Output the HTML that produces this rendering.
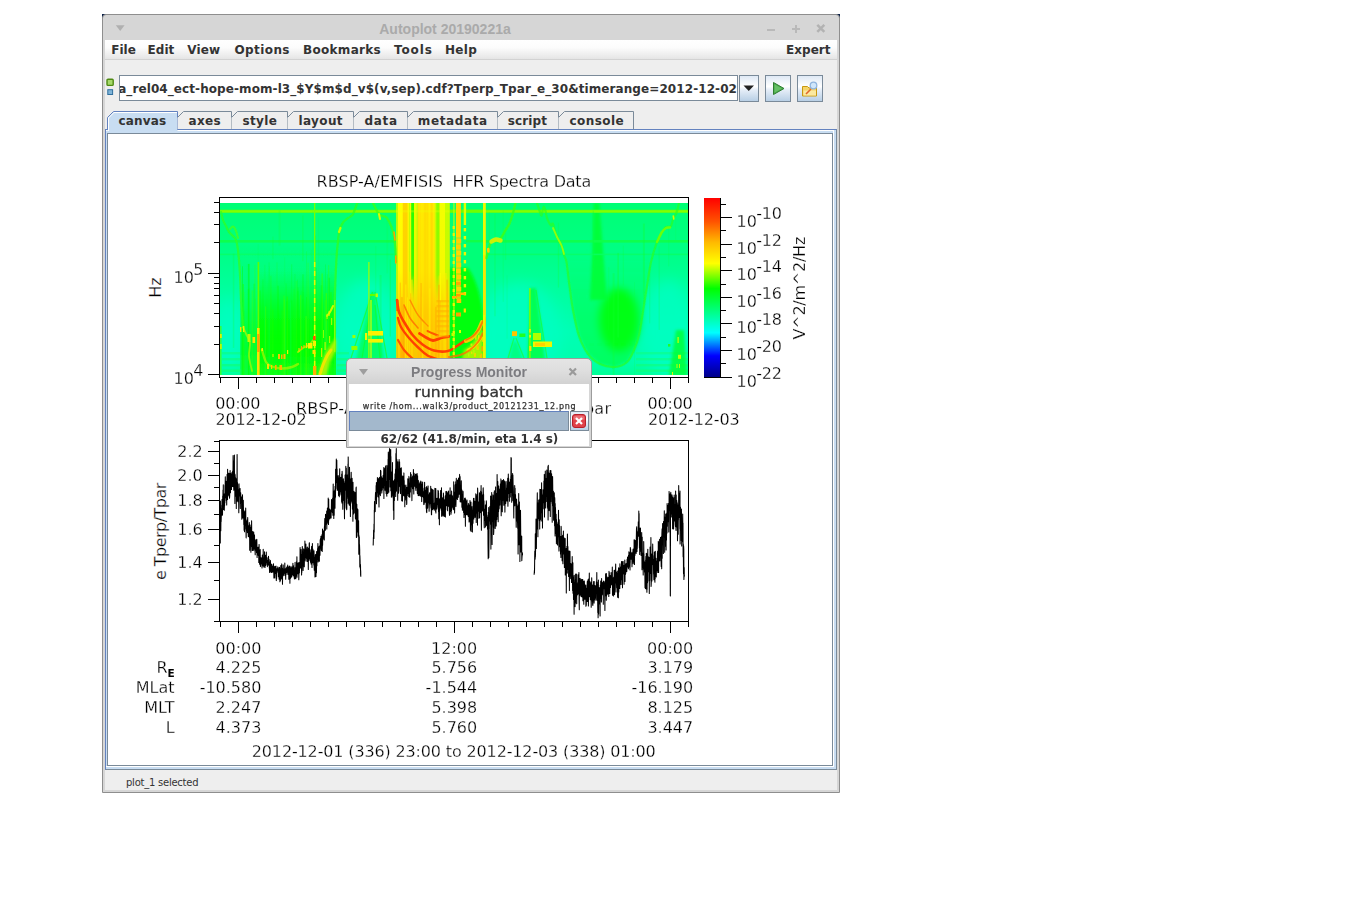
<!DOCTYPE html>
<html lang="en">
<head>
<meta charset="utf-8">
<title>Autoplot 20190221a</title>
<style>
html,body{margin:0;padding:0;background:#fff;}
body{width:1345px;height:916px;overflow:hidden;position:relative;font-family:"DejaVu Sans","Liberation Sans",sans-serif;font-size:12px;color:#333;}
#root{position:absolute;left:0;top:0;width:1345px;height:916px;overflow:hidden;background:#fff;}
#root div,#root span,#root svg{position:absolute;box-sizing:border-box;}
#win{left:102px;top:14px;width:738px;height:779px;background:#d6d6d6;border:1px solid #8e8e8e;border-radius:4px 4px 0 0;}
.corner{background:#0a1e46;}
#title{left:102px;top:21px;width:686px;height:17px;text-align:center;font:bold 14px/17px "Liberation Sans","DejaVu Sans",sans-serif;color:#aaaaaa;white-space:pre;}
#inner{left:105px;top:40px;width:732px;height:750px;background:#eeeeee;}
#menubar{left:105px;top:40px;width:732px;height:20px;background:linear-gradient(#ffffff 0%,#fcfcfc 40%,#e9e9e9 90%,#e4e4e4 100%);border-bottom:1px solid #d2d2d2;}
.mi{top:41px;height:19px;font:bold 12px/19px "DejaVu Sans","Liberation Sans",sans-serif;color:#333;white-space:pre;}
#uri{left:119px;top:75px;width:619px;height:26px;border:1px solid #7a8a99;background:#fff;overflow:hidden;}
#uri span{right:0px;top:1px;letter-spacing:0.085px;font:bold 12px/25px "DejaVu Sans","Liberation Sans",sans-serif;color:#333;white-space:pre;}
.btn{top:75px;height:27px;border:1px solid #7a8a99;background:linear-gradient(#dfe9f5 0%,#ffffff 42%,#e6eef8 55%,#b8cfe5 100%);}
.tab{top:112px;height:19px;font:bold 12px/19px "DejaVu Sans","Liberation Sans",sans-serif;color:#333;text-align:left;white-space:pre;letter-spacing:0.12px;}
#status{left:126px;top:773px;height:20px;letter-spacing:-0.24px;font:10px/20px "DejaVu Sans","Liberation Sans",sans-serif;color:#333;white-space:pre;}
#tabpanel{left:105px;top:129px;width:732px;height:641px;border:1px solid #6382bf;border-right-color:#7a8a99;border-bottom-color:#7a8a99;background:#c8ddf2;}
#tabwhite{left:106px;top:130px;width:728px;height:637px;border:1px solid #fff;border-left:0;}
#canvas{left:107px;top:133px;width:726px;height:633px;border:1px solid #7a8a99;background:#fff;}
#plot{left:0;top:0;width:1345px;height:916px;}
#plot text{font-family:"DejaVu Sans","Liberation Sans",sans-serif;font-size:16px;fill:#000;stroke:#fff;stroke-width:0.26px;}
#pm{left:346px;top:358px;width:246px;height:90px;border:1px solid #9c9c9c;border-radius:5px 5px 0 0;background:linear-gradient(#e4e4e4 0px,#dedede 12px,#d2d2d2 25px,#d6d6d6 26px);}
#pmtitle{left:346px;top:364px;width:246px;height:17px;text-align:center;font:bold 14px/17px "Liberation Sans","DejaVu Sans",sans-serif;color:#7c7c80;white-space:pre;}
#pmbody{left:349px;top:384px;width:240px;height:62px;background:#fff;}
#pmtask{left:349px;top:383.4px;width:240px;height:19px;text-align:center;font:14px/19px "DejaVu Sans","Liberation Sans",sans-serif;color:#333;white-space:pre;transform:scaleX(1.11);transform-origin:50% 50%;-webkit-text-stroke:0.3px #333;}
#pmsub{left:349.5px;top:402px;width:240px;height:10px;text-align:center;font:8px/10px "DejaVu Sans","Liberation Sans",sans-serif;color:#333;white-space:pre;letter-spacing:0.7px;-webkit-text-stroke:0.25px #333;}
#pmbar{left:349px;top:411px;width:220px;height:20px;border:1px solid #7a8a99;border-top-color:#6382bf;border-left-color:#6382bf;background:#a3b8cc;}
#pmcancel{left:570px;top:411px;width:19px;height:20px;border:1px solid #7a8a99;background:linear-gradient(#dfe9f5 0%,#ffffff 42%,#e6eef8 55%,#b8cfe5 100%);}
#pmstat{left:349.4px;top:431.6px;width:240px;height:15px;text-align:center;letter-spacing:-0.07px;font:bold 12px/15px "DejaVu Sans","Liberation Sans",sans-serif;color:#333;white-space:pre;}
</style>
</head>
<body>
<div id="root">
<div class="corner" style="left:102px;top:14px;width:4px;height:4px"></div>
<div class="corner" style="left:836px;top:14px;width:4px;height:4px"></div>
<div id="win"></div>
<svg id="tbicons" style="left:102px;top:14px;width:738px;height:26px" viewBox="0 0 738 26"><path d="M13.8 11.2h8.8l-4.4 5.8z" fill="#b0b0b0"/><path d="M665 15h8v2h-8z" fill="#b9b9b9"/><path d="M690 14h3v-3h2v3h3v2h-3v3h-2v-3h-3z" fill="#b9b9b9"/><path d="M715.3 10.8l7 7M722.3 10.8l-7 7" stroke="#b2b2b2" stroke-width="2.5" fill="none"/></svg>
<div id="title">Autoplot 20190221a</div>
<div id="inner"></div>
<div id="menubar"></div>
<span class="mi" style="left:111.2px;letter-spacing:0.05px">File</span>
<span class="mi" style="left:147.6px;letter-spacing:0px">Edit</span>
<span class="mi" style="left:187.2px;letter-spacing:0.2px">View</span>
<span class="mi" style="left:234.4px;letter-spacing:0.42px">Options</span>
<span class="mi" style="left:303px;letter-spacing:0.31px">Bookmarks</span>
<span class="mi" style="left:394px;letter-spacing:0.87px">Tools</span>
<span class="mi" style="left:445px;letter-spacing:0.33px">Help</span>
<span class="mi" style="left:786px;letter-spacing:0.05px">Expert</span>
<svg id="uriicon" style="left:106px;top:78px;width:10px;height:20px" viewBox="0 0 10 20"><rect x="1" y="1.2" width="6.2" height="6.2" rx="1" fill="#a6d96a" stroke="#4e8a13" stroke-width="1.4"/><rect x="1.8" y="11.7" width="4.8" height="4.8" fill="#7fb4d8" stroke="#2f6f9f" stroke-width="1"/></svg>
<div id="uri"><span>a_rel04_ect-hope-mom-l3_$Y$m$d_v$(v,sep).cdf?Tperp_Tpar_e_30&amp;timerange=2012-12-02</span></div>
<div class="btn" id="dd" style="left:739px;width:20px"></div>
<div class="btn" id="go" style="left:765px;width:26px"></div>
<div class="btn" id="browse" style="left:797px;width:26px"></div>
<svg id="btnicons" style="left:739px;top:75px;width:86px;height:27px" viewBox="0 0 86 27"><path d="M4.5 10.5h10.5l-5.25 5.5z" fill="#222"/><path d="M34.5 7.5l10.5 6-10.5 6z" fill="#4cae4c" stroke="#2e7d32" stroke-width="1" stroke-linejoin="round"/><path d="M35.6 9.4l7.2 4.1-7.2 4.1z" fill="#7ed07e" opacity=".55"/><path d="M63.5 11.5h5l1.5 1.5h7.5v8h-14z" fill="#f5d469" stroke="#c79810" stroke-width="1"/><path d="M64.5 15.5h12.5v5h-12.5z" fill="#fbe9a0"/><path d="M67 19l5-5" stroke="#e0652a" stroke-width="1.6"/><circle cx="74.5" cy="10.5" r="3.3" fill="#cfe6fb" stroke="#8fb4de" stroke-width="1.3"/></svg>
<div id="tabpanel"></div><div id="tabwhite"></div>
<svg id="tabshapes" style="left:105px;top:110px;width:540px;height:22px" viewBox="105 110 540 22">
<path d="M107.5 131.5V117.5l6-6H177.5V131.5z" fill="#c8ddf2"/>
<path d="M108.5 131V118l5.5-5.5H177" fill="none" stroke="#fff" stroke-width="1"/>
<path d="M107.5 130V117.5l6-6H177.5V129.5" fill="none" stroke="#6382bf" stroke-width="1"/>
<path d="M177.5 129V117.5l6-6H231.5V129z" fill="#eeeeee"/>
<path d="M177.5 117.5l6-6H231.5V129.5" fill="none" stroke="#7a8a99" stroke-width="1"/>
<path d="M231.5 129V117.5l6-6H287.5V129z" fill="#eeeeee"/>
<path d="M231.5 117.5l6-6H287.5V129.5" fill="none" stroke="#7a8a99" stroke-width="1"/>
<path d="M287.5 129V117.5l6-6H353.5V129z" fill="#eeeeee"/>
<path d="M287.5 117.5l6-6H353.5V129.5" fill="none" stroke="#7a8a99" stroke-width="1"/>
<path d="M353.5 129V117.5l6-6H407.5V129z" fill="#eeeeee"/>
<path d="M353.5 117.5l6-6H407.5V129.5" fill="none" stroke="#7a8a99" stroke-width="1"/>
<path d="M407.5 129V117.5l6-6H497.5V129z" fill="#eeeeee"/>
<path d="M407.5 117.5l6-6H497.5V129.5" fill="none" stroke="#7a8a99" stroke-width="1"/>
<path d="M497.5 129V117.5l6-6H558.5V129z" fill="#eeeeee"/>
<path d="M497.5 117.5l6-6H558.5V129.5" fill="none" stroke="#7a8a99" stroke-width="1"/>
<path d="M558.5 129V117.5l6-6H633.5V129z" fill="#eeeeee"/>
<path d="M558.5 117.5l6-6H633.5V129.5" fill="none" stroke="#7a8a99" stroke-width="1"/>
</svg>
<div class="tab" style="left:118.4px;width:59px;letter-spacing:0.18px">canvas</div>
<div class="tab" style="left:188.4px;width:43px;letter-spacing:0.4px">axes</div>
<div class="tab" style="left:242.4px;width:45px;letter-spacing:0.4px">style</div>
<div class="tab" style="left:298.4px;width:55px;letter-spacing:0.4px">layout</div>
<div class="tab" style="left:364.4px;width:43px;letter-spacing:0.7px">data</div>
<div class="tab" style="left:417.79999999999995px;width:79px;letter-spacing:0.62px">metadata</div>
<div class="tab" style="left:507.79999999999995px;width:50px;letter-spacing:0.1px">script</div>
<div class="tab" style="left:569.4px;width:64px;letter-spacing:0.45px">console</div>
<div id="canvas"></div>
<svg id="plot" viewBox="0 0 1345 916" width="1345" height="916">
<defs>
<clipPath id="sclip"><rect x="220" y="203" width="468" height="172"/></clipPath>
<filter id="b1" x="-20%" y="-20%" width="140%" height="140%"><feGaussianBlur stdDeviation="0.6"/></filter>
<filter id="b2" x="-30%" y="-30%" width="160%" height="160%"><feGaussianBlur stdDeviation="1.6"/></filter>
<filter id="b4" x="-40%" y="-40%" width="180%" height="180%"><feGaussianBlur stdDeviation="4"/></filter>
<filter id="b7" x="-50%" y="-50%" width="200%" height="200%"><feGaussianBlur stdDeviation="7"/></filter>
<linearGradient id="sbase" x1="0" y1="0" x2="0" y2="1"><stop offset="0" stop-color="#00ff74"/><stop offset="0.27" stop-color="#00ff84"/><stop offset="0.5" stop-color="#00ff9e"/><stop offset="0.75" stop-color="#00ffb4"/><stop offset="0.92" stop-color="#00ffac"/><stop offset="1" stop-color="#00ff94"/></linearGradient>
<linearGradient id="sgl" gradientUnits="userSpaceOnUse" x1="0" y1="245" x2="0" y2="375"><stop offset="0" stop-color="#00ff30" stop-opacity="0"/><stop offset="0.3" stop-color="#00ff30" stop-opacity="0.3"/><stop offset="0.55" stop-color="#00ff18" stop-opacity="0.75"/><stop offset="0.8" stop-color="#04ff08" stop-opacity="0.95"/><stop offset="1" stop-color="#10ff20" stop-opacity="1"/></linearGradient>
<linearGradient id="sgu" gradientUnits="userSpaceOnUse" x1="0" y1="250" x2="0" y2="368"><stop offset="0" stop-color="#00ff40" stop-opacity="0"/><stop offset="0.3" stop-color="#00ff38" stop-opacity="0.35"/><stop offset="0.6" stop-color="#00ff28" stop-opacity="0.5"/><stop offset="1" stop-color="#00ff30" stop-opacity="0.6"/></linearGradient>
<linearGradient id="sfade" gradientUnits="userSpaceOnUse" x1="0" y1="203" x2="0" y2="375"><stop offset="0" stop-color="#fff" stop-opacity="1"/><stop offset="0.42" stop-color="#fff" stop-opacity="1"/><stop offset="0.58" stop-color="#fff" stop-opacity="0"/><stop offset="1" stop-color="#fff" stop-opacity="0"/></linearGradient>
<mask id="mtop" maskUnits="userSpaceOnUse" x="390" y="200" width="70" height="180"><rect x="390" y="200" width="70" height="180" fill="url(#sfade)"/></mask>
<linearGradient id="sgl2" gradientUnits="userSpaceOnUse" x1="0" y1="270" x2="0" y2="375"><stop offset="0" stop-color="#00ff00" stop-opacity="0"/><stop offset="0.35" stop-color="#00ff00" stop-opacity="0.5"/><stop offset="0.7" stop-color="#00ff00" stop-opacity="0.9"/><stop offset="1" stop-color="#00ff00" stop-opacity="0.1"/></linearGradient>
<linearGradient id="sband" x1="0" y1="0" x2="0" y2="1"><stop offset="0" stop-color="#ffc800" stop-opacity="0"/><stop offset="0.4" stop-color="#ffc800" stop-opacity="0.1"/><stop offset="0.62" stop-color="#ffc000" stop-opacity="0.6"/><stop offset="1" stop-color="#ffa800" stop-opacity="0.75"/></linearGradient>
<linearGradient id="sgz" x1="0" y1="0" x2="0" y2="1"><stop offset="0" stop-color="#00ff40" stop-opacity="0"/><stop offset="0.4" stop-color="#00ff20" stop-opacity="0.5"/><stop offset="0.6" stop-color="#00ff00" stop-opacity="1"/><stop offset="1" stop-color="#10ff00" stop-opacity="1"/></linearGradient>
</defs>
<g id="spectrogram" clip-path="url(#sclip)">
<rect x="220" y="203" width="468" height="172" fill="url(#sbase)"/>
<g filter="url(#b7)" fill="#00ffc4" opacity="0.75">
<ellipse cx="228" cy="335" rx="14" ry="38"/>
<ellipse cx="366" cy="330" rx="30" ry="50"/>
<ellipse cx="520" cy="335" rx="42" ry="52"/>
<ellipse cx="668" cy="330" rx="26" ry="50"/>
</g>
<g filter="url(#b4)">
<ellipse cx="619" cy="320" rx="20" ry="32" fill="#00ff00"/>
<ellipse cx="617" cy="318" rx="13" ry="24" fill="#00ff00"/>
</g>
<g filter="url(#b2)">
<path d="M564 250L569.5 286L573 310L579 336L588 354L600 364L615 367L627 362L634 350L639 335L644 305L647 286L652 255Z" fill="url(#sgu)"/>
<path d="M593.5 203H599.5L603 250L607 300H590L592.5 250Z" fill="#00ff30" opacity="0.85"/>
</g>
<g filter="url(#b1)"><path d="M240.5 376V300L239 245H337L336 300V376Z" fill="url(#sgl)"/><path d="M259 376V270H334V376Z" fill="url(#sgl2)"/></g>
<rect x="241" y="270" width="16.5" height="105" fill="#00ff80" opacity="0.3"/>
<rect x="220" y="209.6" width="468" height="3.4" fill="#40ff30"/>
<rect x="220" y="210.2" width="468" height="2.2" fill="#84ff00"/>
<rect x="220" y="240" width="468" height="2.6" fill="#10ff48" opacity="0.9"/>
<rect x="220" y="253.6" width="468" height="1.6" fill="#08ff64" opacity="0.8"/>
<rect x="222" y="352" width="18" height="2.4" fill="#10ff70" opacity="0.5"/>
<rect x="337" y="352" width="12" height="2.4" fill="#10ff70" opacity="0.5"/>
<rect x="636" y="352" width="52" height="2.4" fill="#10ff78" opacity="0.5"/>
<rect x="222" y="358" width="18" height="2.4" fill="#10ff70" opacity="0.55"/>
<rect x="337" y="358" width="12" height="2.4" fill="#10ff70" opacity="0.55"/>
<rect x="636" y="358" width="52" height="2.4" fill="#10ff78" opacity="0.55"/>
<rect x="222" y="364" width="18" height="2.4" fill="#10ff70" opacity="0.6"/>
<rect x="337" y="364" width="12" height="2.4" fill="#10ff70" opacity="0.6"/>
<rect x="636" y="364" width="52" height="2.4" fill="#10ff78" opacity="0.6"/>
<rect x="222" y="369.5" width="18" height="2.4" fill="#10ff70" opacity="0.65"/>
<rect x="337" y="369.5" width="12" height="2.4" fill="#10ff70" opacity="0.65"/>
<rect x="636" y="369.5" width="52" height="2.4" fill="#10ff78" opacity="0.65"/>
<g opacity="0.8">
<rect x="283.5" y="295.6" width="1.7" height="79.4" fill="#40ff00" opacity="0.48"/>
<rect x="321.4" y="273.4" width="1.6" height="101.6" fill="#40ff00" opacity="0.56"/>
<rect x="315.5" y="267.6" width="1.0" height="107.4" fill="#00ff00" opacity="0.52"/>
<rect x="324.7" y="300.1" width="1.3" height="74.9" fill="#40ff00" opacity="0.73"/>
<rect x="302.5" y="298.9" width="0.8" height="76.1" fill="#00ff00" opacity="0.67"/>
<rect x="246.9" y="264.1" width="1.7" height="110.9" fill="#00ff50" opacity="0.27"/>
<rect x="284.6" y="288.4" width="1.6" height="86.6" fill="#00ff50" opacity="0.37"/>
<rect x="268.7" y="262.3" width="0.7" height="112.7" fill="#00ff30" opacity="0.45"/>
<rect x="292.8" y="317.9" width="0.7" height="57.1" fill="#00ff30" opacity="0.41"/>
<rect x="262.6" y="279.3" width="0.7" height="95.7" fill="#00ff00" opacity="0.45"/>
<rect x="320.6" y="285.2" width="1.7" height="89.8" fill="#00ff00" opacity="0.36"/>
<rect x="328.1" y="265.1" width="1.1" height="109.9" fill="#40ff00" opacity="0.46"/>
<rect x="294.2" y="273.9" width="1.4" height="101.1" fill="#00ff30" opacity="0.29"/>
<rect x="272.3" y="319.8" width="1.5" height="55.2" fill="#00ff00" opacity="0.32"/>
<rect x="307.5" y="262.7" width="1.2" height="112.3" fill="#40ff00" opacity="0.34"/>
<rect x="293.6" y="288.8" width="0.8" height="86.2" fill="#20ff00" opacity="0.46"/>
<rect x="277.1" y="285.7" width="1.8" height="89.3" fill="#00ff00" opacity="0.38"/>
<rect x="332.3" y="310.2" width="1.0" height="64.8" fill="#00ff00" opacity="0.36"/>
<rect x="278.1" y="313.3" width="1.4" height="61.7" fill="#00ff00" opacity="0.27"/>
<rect x="254.8" y="288.5" width="0.6" height="86.5" fill="#00ff50" opacity="0.41"/>
<rect x="268.9" y="266.4" width="0.7" height="108.6" fill="#00ff50" opacity="0.57"/>
<rect x="242.5" y="284.1" width="1.3" height="90.9" fill="#20ff00" opacity="0.73"/>
<rect x="286.5" y="296.5" width="1.6" height="78.5" fill="#20ff00" opacity="0.56"/>
<rect x="270.2" y="275.7" width="1.3" height="99.3" fill="#20ff00" opacity="0.33"/>
<rect x="300.1" y="295.2" width="1.4" height="79.8" fill="#40ff00" opacity="0.69"/>
<rect x="297.7" y="287.3" width="0.7" height="87.7" fill="#00ff00" opacity="0.51"/>
<rect x="265.0" y="306.4" width="1.1" height="68.6" fill="#40ff00" opacity="0.66"/>
<rect x="297.1" y="279.6" width="0.8" height="95.4" fill="#00ff00" opacity="0.31"/>
<rect x="286.1" y="301.2" width="1.3" height="73.8" fill="#00ff00" opacity="0.39"/>
<rect x="327.2" y="274.2" width="0.6" height="100.8" fill="#00ff30" opacity="0.46"/>
<rect x="264.4" y="264.8" width="0.9" height="110.2" fill="#00ff50" opacity="0.54"/>
<rect x="253.4" y="283.7" width="1.7" height="91.3" fill="#00ff30" opacity="0.58"/>
<rect x="306.0" y="297.1" width="0.8" height="77.9" fill="#00ff00" opacity="0.71"/>
<rect x="285.6" y="283.4" width="1.0" height="91.6" fill="#00ff00" opacity="0.26"/>
<rect x="300.8" y="290.9" width="1.5" height="84.1" fill="#00ff30" opacity="0.32"/>
<rect x="247.8" y="289.2" width="1.0" height="85.8" fill="#00ff00" opacity="0.70"/>
<rect x="310.3" y="304.2" width="1.6" height="70.8" fill="#00ff30" opacity="0.43"/>
<rect x="305.4" y="316.1" width="1.6" height="58.9" fill="#40ff00" opacity="0.72"/>
<rect x="243.8" y="292.0" width="0.6" height="83.0" fill="#40ff00" opacity="0.44"/>
<rect x="242.2" y="266.3" width="0.7" height="108.7" fill="#00ff00" opacity="0.75"/>
<rect x="323.7" y="305.7" width="1.1" height="69.3" fill="#00ff50" opacity="0.48"/>
<rect x="284.5" y="294.5" width="1.2" height="80.5" fill="#00ff50" opacity="0.26"/>
<rect x="297.5" y="290.9" width="0.9" height="84.1" fill="#00ff00" opacity="0.50"/>
<rect x="298.8" y="317.2" width="0.9" height="57.8" fill="#00ff00" opacity="0.43"/>
<rect x="254.5" y="298.7" width="1.2" height="76.3" fill="#00ff30" opacity="0.58"/>
<rect x="282.5" y="315.5" width="1.0" height="59.5" fill="#00ff30" opacity="0.35"/>
<rect x="281.5" y="310.4" width="1.7" height="64.6" fill="#20ff00" opacity="0.44"/>
<rect x="295.8" y="281.0" width="0.8" height="94.0" fill="#40ff00" opacity="0.43"/>
<rect x="325.2" y="264.4" width="0.7" height="110.6" fill="#00ff30" opacity="0.66"/>
<rect x="251.6" y="290.3" width="1.7" height="84.7" fill="#40ff00" opacity="0.44"/>
<rect x="289.9" y="302.3" width="1.5" height="72.7" fill="#00ff50" opacity="0.48"/>
<rect x="248.0" y="263.9" width="1.6" height="111.1" fill="#00ff00" opacity="0.59"/>
<rect x="267.4" y="283.3" width="1.4" height="91.7" fill="#00ff50" opacity="0.26"/>
<rect x="253.8" y="289.3" width="0.6" height="85.7" fill="#00ff30" opacity="0.37"/>
<rect x="254.2" y="264.8" width="1.4" height="110.2" fill="#40ff00" opacity="0.30"/>
<rect x="291.3" y="300.4" width="1.0" height="74.6" fill="#00ff00" opacity="0.59"/>
<rect x="259.7" y="290.5" width="0.8" height="84.5" fill="#00ff00" opacity="0.63"/>
<rect x="291.3" y="264.2" width="0.9" height="110.8" fill="#00ff30" opacity="0.52"/>
<rect x="330.0" y="292.0" width="1.8" height="83.0" fill="#20ff00" opacity="0.45"/>
<rect x="315.4" y="316.4" width="0.7" height="58.6" fill="#40ff00" opacity="0.31"/>
<rect x="283.6" y="299.5" width="1.7" height="75.5" fill="#40ff00" opacity="0.53"/>
<rect x="302.4" y="292.2" width="1.6" height="82.8" fill="#00ff30" opacity="0.48"/>
<rect x="302.2" y="274.3" width="1.5" height="100.7" fill="#00ff00" opacity="0.36"/>
<rect x="325.6" y="320.8" width="1.8" height="54.2" fill="#00ff50" opacity="0.74"/>
<rect x="328.6" y="277.7" width="1.5" height="97.3" fill="#00ff00" opacity="0.42"/>
<rect x="248.8" y="288.5" width="1.3" height="86.5" fill="#00ff30" opacity="0.49"/>
<rect x="243.7" y="310.5" width="0.7" height="64.5" fill="#00ff00" opacity="0.34"/>
<rect x="272.5" y="309.3" width="0.8" height="65.7" fill="#20ff00" opacity="0.75"/>
<rect x="325.7" y="293.1" width="1.4" height="81.9" fill="#40ff00" opacity="0.72"/>
<rect x="287.3" y="318.9" width="0.7" height="56.1" fill="#20ff00" opacity="0.47"/>
<rect x="481.3" y="269.5" width="0.8" height="70.5" fill="#10ff30" opacity="0.30"/>
<rect x="642.9" y="223.5" width="2.0" height="80.4" fill="#10ff30" opacity="0.41"/>
<rect x="504.8" y="227.4" width="1.4" height="32.7" fill="#10ff30" opacity="0.23"/>
<rect x="452.9" y="235.9" width="0.6" height="30.3" fill="#10ff30" opacity="0.26"/>
<rect x="471.8" y="206.5" width="1.4" height="102.6" fill="#10ff30" opacity="0.45"/>
<rect x="278.6" y="210.5" width="2.0" height="35.0" fill="#10ff30" opacity="0.29"/>
<rect x="649.2" y="267.0" width="1.0" height="56.4" fill="#10ff30" opacity="0.30"/>
<rect x="379.6" y="275.1" width="2.0" height="104.2" fill="#10ff30" opacity="0.31"/>
<rect x="272.4" y="236.6" width="1.0" height="22.6" fill="#10ff30" opacity="0.36"/>
<rect x="675.5" y="205.8" width="0.6" height="34.0" fill="#10ff30" opacity="0.24"/>
<rect x="557.8" y="222.6" width="1.3" height="64.9" fill="#10ff30" opacity="0.32"/>
<rect x="617.3" y="252.9" width="1.7" height="84.6" fill="#10ff30" opacity="0.41"/>
<rect x="232.8" y="253.6" width="1.5" height="94.3" fill="#10ff30" opacity="0.31"/>
<rect x="622.8" y="245.7" width="0.9" height="39.7" fill="#10ff30" opacity="0.31"/>
<rect x="494.2" y="213.9" width="1.5" height="102.3" fill="#10ff30" opacity="0.25"/>
<rect x="306.0" y="251.3" width="0.9" height="100.2" fill="#10ff30" opacity="0.38"/>
<rect x="312.3" y="210.7" width="0.8" height="100.0" fill="#10ff30" opacity="0.18"/>
<rect x="658.7" y="246.5" width="0.9" height="83.4" fill="#10ff30" opacity="0.34"/>
<rect x="592.7" y="210.7" width="1.1" height="71.3" fill="#10ff30" opacity="0.40"/>
<rect x="389.7" y="259.4" width="1.1" height="77.1" fill="#10ff30" opacity="0.45"/>
<rect x="608.5" y="267.2" width="0.6" height="63.4" fill="#10ff30" opacity="0.38"/>
<rect x="506.6" y="275.4" width="0.9" height="63.3" fill="#10ff30" opacity="0.18"/>
<rect x="302.0" y="215.6" width="1.6" height="45.5" fill="#10ff30" opacity="0.32"/>
<rect x="284.4" y="257.5" width="0.7" height="27.0" fill="#10ff30" opacity="0.27"/>
<rect x="386.5" y="219.8" width="1.6" height="53.6" fill="#10ff30" opacity="0.16"/>
<rect x="314.9" y="235.6" width="1.2" height="52.4" fill="#10ff30" opacity="0.43"/>
<rect x="502.7" y="210.6" width="1.1" height="91.3" fill="#10ff30" opacity="0.18"/>
<rect x="612.6" y="273.1" width="2.0" height="101.8" fill="#10ff30" opacity="0.32"/>
<rect x="310.6" y="249.8" width="1.7" height="50.7" fill="#10ff30" opacity="0.23"/>
<rect x="276.0" y="262.4" width="2.0" height="34.4" fill="#10ff30" opacity="0.19"/>
<rect x="375.1" y="246.1" width="1.2" height="53.3" fill="#10ff30" opacity="0.20"/>
<rect x="318.0" y="217.8" width="1.1" height="91.8" fill="#10ff30" opacity="0.18"/>
<rect x="634.1" y="282.2" width="0.7" height="101.2" fill="#10ff30" opacity="0.23"/>
<rect x="668.1" y="226.9" width="1.2" height="39.4" fill="#10ff30" opacity="0.20"/>
<rect x="257.7" y="244.2" width="0.9" height="64.8" fill="#10ff30" opacity="0.19"/>
<rect x="488.8" y="212.2" width="1.0" height="29.7" fill="#10ff30" opacity="0.28"/>
</g>
<rect x="449.5" y="203" width="34" height="172" fill="#00ff78"/>
<g filter="url(#b2)"><path d="M449 268H468Q480 285 484 320V376H449Z" fill="#00ff08"/></g>
<rect x="449.5" y="209.6" width="34" height="3.2" fill="#70ff00"/>
<rect x="466" y="240" width="17" height="2.4" fill="#10ff48"/>
<rect x="396.4" y="203" width="53.1" height="172" fill="#ffec00"/>
<rect x="396.4" y="203" width="1.6" height="172" fill="#b8ff00"/>
<rect x="398" y="203" width="4.8" height="172" fill="#ffff00"/>
<rect x="402.8" y="203" width="4.9" height="172" fill="#ffd400"/>
<rect x="407.7" y="203" width="1.3" height="172" fill="#f8f800"/>
<rect x="409" y="203" width="0.8" height="172" fill="#b0ff00" mask="url(#mtop)"/>
<rect x="409.8" y="203" width="1.4" height="172" fill="#f0ff00"/>
<rect x="411.2" y="203" width="2.9" height="172" fill="#28ff00" mask="url(#mtop)"/>
<rect x="414.1" y="203" width="2.7" height="172" fill="#e8ff00"/>
<rect x="416.8" y="203" width="0.8" height="172" fill="#90ff00" mask="url(#mtop)"/>
<rect x="417.6" y="203" width="16.7" height="172" fill="#ffe800"/>
<rect x="434.3" y="203" width="1.9" height="172" fill="#c8ff00" mask="url(#mtop)"/>
<rect x="436.2" y="203" width="3.5" height="172" fill="#88ff00" mask="url(#mtop)"/>
<rect x="439.7" y="203" width="5.3" height="172" fill="#f4ff00"/>
<rect x="445" y="203" width="4.5" height="172" fill="#c4ff00" mask="url(#mtop)"/>
<rect x="425.6" y="203" width="1.7" height="172" fill="#ffe000" opacity="0.7"/>
<rect x="418.2" y="203" width="1.2" height="172" fill="#ffdc00" opacity="0.7"/>
<rect x="431.6" y="203" width="1.6" height="172" fill="#ffd800" opacity="0.7"/>
<rect x="424.2" y="203" width="1.6" height="172" fill="#ffd800" opacity="0.7"/>
<rect x="432.9" y="203" width="1.9" height="172" fill="#ffec00" opacity="0.7"/>
<rect x="419.1" y="203" width="1.7" height="172" fill="#ffd800" opacity="0.7"/>
<rect x="432.3" y="203" width="2.1" height="172" fill="#ffec00" opacity="0.7"/>
<rect x="420.4" y="203" width="2.2" height="172" fill="#ffec00" opacity="0.7"/>
<rect x="430.8" y="203" width="1.7" height="172" fill="#ffd800" opacity="0.7"/>
<rect x="418.9" y="203" width="1.4" height="172" fill="#ffec00" opacity="0.7"/>
<rect x="425.9" y="203" width="1.2" height="172" fill="#ffd800" opacity="0.7"/>
<rect x="426.0" y="203" width="1.7" height="172" fill="#ffec00" opacity="0.7"/>
<rect x="426.4" y="203" width="1.7" height="172" fill="#ffdc00" opacity="0.7"/>
<rect x="429.2" y="203" width="0.8" height="172" fill="#fff400" opacity="0.7"/>
<rect x="396.4" y="203" width="53.1" height="172" fill="url(#sband)"/>
<rect x="396.4" y="210.2" width="53" height="2.2" fill="#f0ff00" opacity="0.35"/>
<rect x="409.5" y="271.7" width="1.3" height="104.3" fill="#fff000" opacity="0.67"/>
<rect x="399.7" y="282.6" width="0.9" height="93.4" fill="#ffb000" opacity="0.80"/>
<rect x="445.2" y="272.9" width="1.3" height="103.1" fill="#fff000" opacity="0.59"/>
<rect x="446.6" y="279.7" width="0.9" height="96.3" fill="#ffa000" opacity="0.72"/>
<rect x="443.4" y="275.8" width="1.5" height="100.2" fill="#fff000" opacity="0.45"/>
<rect x="428.8" y="288.2" width="1.8" height="87.8" fill="#fff000" opacity="0.54"/>
<rect x="404.9" y="284.5" width="1.6" height="91.5" fill="#fff000" opacity="0.58"/>
<rect x="410.4" y="293.3" width="1.2" height="82.7" fill="#ffb000" opacity="0.70"/>
<rect x="438.6" y="275.5" width="1.7" height="100.5" fill="#ffe000" opacity="0.50"/>
<rect x="402.8" y="305.7" width="1.5" height="70.3" fill="#ffa000" opacity="0.54"/>
<rect x="410.8" y="297.4" width="1.6" height="78.6" fill="#ffa000" opacity="0.48"/>
<rect x="411.2" y="279.6" width="1.4" height="96.4" fill="#fff000" opacity="0.66"/>
<rect x="407.0" y="297.3" width="0.8" height="78.7" fill="#ffff00" opacity="0.50"/>
<rect x="398.4" y="271.5" width="1.4" height="104.5" fill="#fff000" opacity="0.43"/>
<rect x="401.4" y="297.1" width="1.1" height="78.9" fill="#ffa000" opacity="0.79"/>
<rect x="421.7" y="284.2" width="1.2" height="91.8" fill="#ffe000" opacity="0.70"/>
<rect x="439.8" y="273.0" width="1.3" height="103.0" fill="#ffff00" opacity="0.73"/>
<rect x="439.7" y="300.8" width="1.3" height="75.2" fill="#ffb000" opacity="0.50"/>
<rect x="438.3" y="284.8" width="1.2" height="91.2" fill="#ffa000" opacity="0.62"/>
<rect x="435.1" y="306.8" width="1.6" height="69.2" fill="#ffb000" opacity="0.63"/>
<rect x="420.6" y="283.0" width="0.9" height="93.0" fill="#ffa000" opacity="0.63"/>
<rect x="421.7" y="297.4" width="1.8" height="78.6" fill="#ffe000" opacity="0.40"/>
<g fill="none" stroke="#ff4000" stroke-linecap="round" filter="url(#b1)">
<path d="M397.0 300.0C397.3 302.0 397.9 308.5 399.0 312.0C400.1 315.5 401.2 317.2 403.5 321.0C405.8 324.8 409.4 331.1 412.6 335.0C415.8 338.9 418.9 341.9 422.5 344.5C426.1 347.1 429.8 349.4 434.0 350.5C438.2 351.6 444.2 351.8 448.0 351.0C451.8 350.2 454.0 347.8 457.0 346.0C460.0 344.2 464.5 341.0 466.0 340.0" stroke-width="2.6"/>
<path d="M398.0 318.0C398.5 319.5 399.2 323.7 401.0 327.0C402.8 330.3 406.2 334.7 409.0 338.0C411.8 341.3 414.5 344.1 417.6 347.0C420.7 349.9 423.8 353.3 427.5 355.5C431.2 357.7 437.9 359.2 440.0 360.0" stroke-width="2.4"/>
<path d="M419.5 333.5C420.6 334.2 423.8 336.3 426.0 337.5C428.2 338.7 430.5 340.4 433.0 340.5C435.5 340.6 438.3 338.7 441.0 338.0C443.7 337.3 447.7 336.8 449.0 336.5" stroke-width="2.8"/>
<path d="M427.5 331.0C428.4 331.4 431.2 332.8 433.0 333.5C434.8 334.2 437.2 335.2 438.0 335.5" stroke-width="2" stroke="#ff5800"/>
<path d="M398.0 340.0C399.0 341.7 401.7 347.0 404.0 350.0C406.3 353.0 409.3 355.7 412.0 358.0C414.7 360.3 418.7 363.0 420.0 364.0" stroke-width="2.2" stroke="#ff5000"/>
<path d="M404.0 305.0C405.0 307.2 407.7 314.2 410.0 318.0C412.3 321.8 416.7 326.3 418.0 328.0" stroke-width="1.6" stroke="#ff8000"/>
<path d="M410.0 300.0C411.3 302.5 415.0 310.7 418.0 315.0C421.0 319.3 426.3 324.2 428.0 326.0" stroke-width="1.4" stroke="#ff9000"/>
</g>
<rect x="396.4" y="300" width="2" height="11" fill="#ff4800"/>
<rect x="436.5" y="300" width="12.5" height="2.4" fill="#ffb000" opacity="0.55"/>
<rect x="436.5" y="305" width="12.5" height="2.4" fill="#ffb000" opacity="0.55"/>
<rect x="436.5" y="310" width="12.5" height="2.4" fill="#ffb000" opacity="0.55"/>
<rect x="436.5" y="315" width="12.5" height="2.4" fill="#ffb000" opacity="0.55"/>
<rect x="436.5" y="320" width="12.5" height="2.4" fill="#ffb000" opacity="0.55"/>
<rect x="436.5" y="325" width="12.5" height="2.4" fill="#ffb000" opacity="0.55"/>
<rect x="436.5" y="330" width="12.5" height="2.4" fill="#ffb000" opacity="0.55"/>
<rect x="436.5" y="335" width="12.5" height="2.4" fill="#ffb000" opacity="0.55"/>
<rect x="453" y="203" width="1.8" height="155" fill="#d0ff00" opacity="0.55"/>
<rect x="452.6" y="226" width="2.2" height="3" fill="#f4f000"/>
<rect x="452.6" y="233" width="2.2" height="3" fill="#f4f000"/>
<rect x="452.6" y="240" width="2.2" height="3" fill="#f4f000"/>
<rect x="452.6" y="247" width="2.2" height="3" fill="#f4f000"/>
<rect x="452.6" y="254" width="2.2" height="3" fill="#f4f000"/>
<rect x="452.6" y="261" width="2.2" height="3" fill="#f4f000"/>
<rect x="452.6" y="268" width="2.2" height="3" fill="#f4f000"/>
<rect x="452.6" y="275" width="2.2" height="3" fill="#f4f000"/>
<rect x="452.6" y="282" width="2.2" height="3" fill="#f4f000"/>
<rect x="452.6" y="289" width="2.2" height="3" fill="#f4f000"/>
<rect x="452.6" y="296" width="2.2" height="3" fill="#f4f000"/>
<rect x="452.6" y="303" width="2.2" height="3" fill="#f4f000"/>
<rect x="452.6" y="310" width="2.2" height="3" fill="#f4f000"/>
<rect x="452.6" y="317" width="2.2" height="3" fill="#f4f000"/>
<rect x="452.6" y="324" width="2.2" height="3" fill="#f4f000"/>
<rect x="452.6" y="331" width="2.2" height="3" fill="#f4f000"/>
<rect x="452.6" y="338" width="2.2" height="3" fill="#f4f000"/>
<rect x="452.6" y="345" width="2.2" height="3" fill="#f4f000"/>
<rect x="452.6" y="352" width="2.2" height="3" fill="#f4f000"/>
<rect x="456" y="203" width="4.8" height="30" fill="#ffd400"/>
<rect x="456.0" y="233" width="4.6" height="4" fill="#ffe000"/>
<rect x="456.6" y="239" width="4.6" height="4" fill="#ffc400"/>
<rect x="456.0" y="245" width="4.6" height="4" fill="#ffc400"/>
<rect x="456.6" y="251" width="4.6" height="4" fill="#ffe000"/>
<rect x="456.0" y="257" width="4.6" height="4" fill="#ffc400"/>
<rect x="456.6" y="263" width="4.6" height="4" fill="#ffc400"/>
<rect x="456.0" y="269" width="4.6" height="4" fill="#ffe000"/>
<rect x="456.6" y="275" width="4.6" height="4" fill="#ffc400"/>
<rect x="456.0" y="281" width="4.6" height="4" fill="#ffc400"/>
<rect x="456.6" y="287" width="4.6" height="4" fill="#ffe000"/>
<rect x="456.0" y="293" width="4.6" height="4" fill="#ffc400"/>
<rect x="456.6" y="299" width="4.6" height="4" fill="#ffc400"/>
<rect x="456" y="203" width="4.8" height="96" fill="#ffd400" opacity="0.8"/>
<rect x="463.7" y="203" width="2.4" height="22" fill="#e0ff00"/>
<rect x="463.7" y="228" width="2.4" height="3.4" fill="#f0f400"/>
<rect x="463.7" y="236" width="2.4" height="3.4" fill="#f0f400"/>
<rect x="463.7" y="244" width="2.4" height="3.4" fill="#f0f400"/>
<rect x="463.7" y="252" width="2.4" height="3.4" fill="#f0f400"/>
<rect x="463.7" y="260" width="2.4" height="3.4" fill="#f0f400"/>
<rect x="463.7" y="268" width="2.4" height="3.4" fill="#f0f400"/>
<rect x="463.7" y="276" width="2.4" height="3.4" fill="#f0f400"/>
<rect x="463.7" y="284" width="2.4" height="3.4" fill="#f0f400"/>
<rect x="463.7" y="292" width="2.4" height="3.4" fill="#f0f400"/>
<rect x="456" y="282" width="5" height="3" fill="#ffa800"/>
<rect x="452" y="296" width="5" height="2.5" fill="#ffb400"/>
<rect x="456" y="294" width="5" height="2.5" fill="#ff9c00"/>
<rect x="460.5" y="292.5" width="5" height="2.5" fill="#ffc000"/>
<rect x="456" y="312.5" width="5" height="4" fill="#ffa000"/>
<rect x="463.7" y="308.5" width="2.2" height="4" fill="#ffe000"/>
<rect x="452.5" y="313" width="2" height="3" fill="#ffd000"/>
<rect x="459" y="330" width="2" height="3" fill="#e0ff00"/>
<rect x="451.5" y="333" width="3" height="3" fill="#c0ff00"/>
<g filter="url(#b2)"><path d="M464 350Q474 346 482 326L483 360H462Z" fill="#d8f000" opacity="0.75"/></g>
<rect x="468.2" y="353.3" width="1.1" height="3.2" fill="#c0ff00" opacity="0.85"/>
<rect x="476.5" y="346.8" width="2.1" height="2.9" fill="#f0f000" opacity="0.85"/>
<rect x="475.1" y="335.8" width="1.4" height="3.8" fill="#ffe000" opacity="0.85"/>
<rect x="473.9" y="353.1" width="2.1" height="3.8" fill="#ffd000" opacity="0.85"/>
<rect x="478.1" y="335.1" width="1.3" height="5.9" fill="#f0f000" opacity="0.85"/>
<rect x="476.6" y="341.5" width="1.4" height="3.5" fill="#ffe000" opacity="0.85"/>
<rect x="473.3" y="349.9" width="1.2" height="4.4" fill="#c0ff00" opacity="0.85"/>
<rect x="471.1" y="351.6" width="1.3" height="2.2" fill="#ffe000" opacity="0.85"/>
<rect x="470.5" y="343.5" width="1.9" height="2.3" fill="#f0f000" opacity="0.85"/>
<rect x="476.9" y="345.5" width="1.9" height="4.0" fill="#ffc000" opacity="0.85"/>
<rect x="480.2" y="336.1" width="1.5" height="3.4" fill="#ffa800" opacity="0.85"/>
<rect x="481.4" y="346.2" width="1.6" height="5.2" fill="#ffa800" opacity="0.85"/>
<rect x="481.7" y="336.5" width="2.0" height="5.3" fill="#ffe000" opacity="0.85"/>
<rect x="479.8" y="354.7" width="1.0" height="3.4" fill="#ffd000" opacity="0.85"/>
<rect x="480.5" y="353.5" width="1.9" height="6.0" fill="#ffc000" opacity="0.85"/>
<g filter="url(#b1)" fill="none" stroke-linecap="round">
<path d="M466.0 341.0C467.0 340.5 470.0 339.7 472.0 338.0C474.0 336.3 476.3 333.7 478.0 331.0C479.7 328.3 481.3 323.5 482.0 322.0" stroke="#ffd000" stroke-width="4" opacity="0.9"/>
<path d="M468.0 350.0C469.2 349.3 472.8 348.0 475.0 346.0C477.2 344.0 480.0 339.3 481.0 338.0" stroke="#ffe800" stroke-width="3" opacity="0.8"/>
<path d="M484.2 317.0C484.3 318.0 484.7 320.8 484.6 323.0C484.5 325.2 483.8 328.8 483.6 330.0" stroke="#ff3000" stroke-width="2.4"/>
<path d="M449.0 357.0C450.8 356.7 456.5 356.2 460.0 355.0C463.5 353.8 467.0 352.2 470.0 350.0C473.0 347.8 475.8 344.8 478.0 342.0C480.2 339.2 482.2 334.5 483.0 333.0" stroke="#ff7000" stroke-width="2" opacity="0.8"/>
<path d="M466.0 340.0C467.2 339.3 470.8 337.8 473.0 336.0C475.2 334.2 477.3 331.5 479.0 329.0C480.7 326.5 482.3 322.3 483.0 321.0" stroke="#ff5a00" stroke-width="1.8" opacity="0.7"/>
</g>
<rect x="483" y="203" width="2.8" height="172" fill="#f0f800"/>
<rect x="483.2" y="255" width="2.4" height="60" fill="#ffd800" opacity="0.6"/>
<rect x="314" y="203" width="1.3" height="172" fill="#78ff00"/>
<rect x="313.9" y="262" width="1.5" height="5" fill="#e8f800"/>
<rect x="313.9" y="271" width="1.5" height="5" fill="#e8f800"/>
<rect x="313.9" y="280" width="1.5" height="5" fill="#e8f800"/>
<rect x="313.9" y="289" width="1.5" height="5" fill="#e8f800"/>
<rect x="313.9" y="298" width="1.5" height="5" fill="#e8f800"/>
<rect x="313.9" y="307" width="1.5" height="5" fill="#e8f800"/>
<rect x="313.9" y="316" width="1.5" height="5" fill="#e8f800"/>
<rect x="313.9" y="325" width="1.5" height="5" fill="#e8f800"/>
<rect x="313.9" y="334" width="1.5" height="5" fill="#e8f800"/>
<rect x="313.9" y="343" width="1.5" height="5" fill="#e8f800"/>
<rect x="313.9" y="352" width="1.5" height="5" fill="#e8f800"/>
<rect x="313.9" y="361" width="1.5" height="5" fill="#e8f800"/>
<rect x="313.9" y="370" width="1.5" height="5" fill="#e8f800"/>
<rect x="313" y="366" width="3.4" height="9" fill="#ffb000"/>
<rect x="257.6" y="262" width="1.6" height="113" fill="#60ff00"/>
<g filter="url(#b1)"><rect x="257" y="328" width="2.6" height="47" fill="#ffe000"/><rect x="257.2" y="334" width="2.4" height="18" fill="#ffa000"/></g>
<rect x="220" y="326" width="1.6" height="49" fill="#40ff20" opacity="0.8"/><rect x="220" y="334" width="1.8" height="4" fill="#e0f000"/><rect x="220" y="344" width="1.8" height="5" fill="#c0f800"/>
<g fill="none" stroke-linecap="round" filter="url(#b1)">
<path d="M221.0 212.0C221.3 213.3 222.2 217.7 223.0 220.0C223.8 222.3 225.0 224.0 226.0 226.0C227.0 228.0 227.8 230.3 229.0 232.0C230.2 233.7 231.8 234.7 233.0 236.0C234.2 237.3 235.2 237.7 236.0 240.0C236.8 242.3 237.3 244.2 238.0 250.0C238.7 255.8 239.5 266.7 240.0 275.0C240.5 283.3 240.5 291.3 241.0 300.0C241.5 308.7 242.7 322.5 243.0 327.0" stroke="#30ff20" stroke-width="2.2" opacity="0.75"/>
<path d="M230.0 229.0C230.5 228.6 232.0 226.2 233.0 226.5C234.0 226.8 235.2 229.1 236.0 231.0C236.8 232.9 237.7 236.8 238.0 238.0" stroke="#50ff10" stroke-width="2" opacity="0.7"/>
<path d="M243.0 327.0C243.7 328.5 245.8 333.3 247.0 336.0C248.2 338.7 249.7 339.7 250.0 343.0C250.3 346.3 248.7 351.3 249.0 356.0C249.3 360.7 251.5 368.5 252.0 371.0" stroke="#b0f800" stroke-width="1.8" opacity="0.7"/>
<path d="M262.0 350.0C262.7 352.0 264.3 359.2 266.0 362.0C267.7 364.8 269.3 365.4 272.0 366.5C274.7 367.6 278.7 368.4 282.0 368.5C285.3 368.6 289.3 367.8 292.0 367.0C294.7 366.2 297.0 364.5 298.0 364.0" stroke="#c8f400" stroke-width="2.4" opacity="0.6"/>
<path d="M298.0 352.0C298.8 351.3 301.2 349.2 303.0 348.0C304.8 346.8 307.2 346.5 309.0 345.0C310.8 343.5 313.2 340.0 314.0 339.0" stroke="#e0f000" stroke-width="2" opacity="0.6"/>
<path d="M320.0 374.0C320.7 372.0 322.5 365.7 324.0 362.0C325.5 358.3 327.3 354.8 329.0 352.0C330.7 349.2 333.0 348.7 334.0 345.0C335.0 341.3 334.9 335.5 335.0 330.0C335.1 324.5 334.5 318.7 334.5 312.0C334.5 305.3 334.7 299.0 335.0 290.0C335.3 281.0 336.0 266.2 336.5 258.0C337.0 249.8 337.5 245.7 338.0 241.0C338.5 236.3 338.7 233.1 339.5 230.0C340.3 226.9 341.6 224.5 343.0 222.5C344.4 220.5 346.4 219.2 348.0 218.0C349.6 216.8 351.3 216.5 352.5 215.0C353.7 213.5 354.2 211.0 355.0 209.0C355.8 207.0 356.9 204.0 357.3 203.0" stroke="#30ff18" stroke-width="2.2" opacity="0.75"/>
<path d="M320.0 374.0C320.5 372.5 321.8 368.0 323.0 365.0C324.2 362.0 325.7 358.5 327.0 356.0C328.3 353.5 330.3 351.0 331.0 350.0" stroke="#ffd800" stroke-width="3"/>
<path d="M327.0 316.0C327.5 315.3 329.0 313.7 330.0 312.0C331.0 310.3 332.5 307.0 333.0 306.0" stroke="#d0f800" stroke-width="2"/>
<path d="M339.0 232.0 L340.5 228.0" stroke="#c0ff00" stroke-width="2.2"/>
<path d="M373.0 203.0C373.5 204.0 375.0 207.1 376.0 209.0C377.0 210.9 377.8 213.3 379.0 214.5C380.2 215.7 381.7 215.4 383.0 216.0C384.3 216.6 385.6 216.2 387.0 218.0C388.4 219.8 390.3 223.8 391.5 227.0C392.7 230.2 393.3 233.2 394.0 237.0C394.7 240.8 395.2 245.8 395.5 250.0C395.8 254.2 395.9 260.0 396.0 262.0" stroke="#40ff10" stroke-width="2.2" opacity="0.75"/>
<path d="M379.0 214.0 L380.0 219.0" stroke="#e0f800" stroke-width="2"/>
<path d="M394.0 232.0 L395.0 240.0" stroke="#ffa000" stroke-width="1.6"/>
<path d="M395.8 256.0 L395.8 263.0" stroke="#ffa000" stroke-width="1.6"/>
<path d="M486.5 258.0C486.8 256.5 487.6 251.8 488.5 249.0C489.4 246.2 490.1 242.7 492.0 241.0C493.9 239.3 497.8 240.7 500.0 239.0C502.2 237.3 503.4 233.6 505.0 231.0C506.6 228.4 508.2 226.5 509.5 223.5C510.8 220.5 512.0 216.4 513.0 213.0C514.0 209.6 515.1 204.7 515.5 203.0" stroke="#40ff10" stroke-width="2.4" opacity="0.8"/>
<path d="M491.5 241.5C492.2 241.2 494.5 239.7 496.0 239.5C497.5 239.3 499.8 240.3 500.5 240.5" stroke="#e8f000" stroke-width="4.5" opacity="0.85"/>
<path d="M488.2 249.0 L488.4 251.5" stroke="#ffd000" stroke-width="2.6"/>
<path d="M537.0 203.0C537.3 204.0 538.2 206.9 539.0 209.0C539.8 211.1 540.8 215.8 541.5 215.5C542.2 215.2 542.8 207.8 543.5 207.0C544.2 206.2 544.9 209.2 545.5 211.0C546.1 212.8 546.1 215.6 547.0 218.0C547.9 220.4 550.0 224.5 551.0 225.5C552.0 226.5 552.0 222.1 553.0 224.0C554.0 225.9 555.6 233.5 557.0 237.0C558.4 240.5 560.3 242.0 561.5 245.0C562.7 248.0 563.2 252.2 564.0 255.0C564.8 257.8 565.6 256.8 566.5 262.0C567.4 267.2 568.4 278.0 569.5 286.0C570.6 294.0 571.4 301.7 573.0 310.0C574.6 318.3 576.5 328.7 579.0 336.0C581.5 343.3 584.5 349.3 588.0 354.0C591.5 358.7 595.5 361.8 600.0 364.0C604.5 366.2 610.5 367.3 615.0 367.0C619.5 366.7 623.8 364.8 627.0 362.0C630.2 359.2 632.0 354.5 634.0 350.0C636.0 345.5 637.3 342.5 639.0 335.0C640.7 327.5 642.7 313.2 644.0 305.0C645.3 296.8 645.8 293.2 647.0 286.0C648.2 278.8 649.3 269.3 651.0 262.0C652.7 254.7 655.1 247.1 657.0 242.0C658.9 236.9 661.0 234.0 662.5 231.5C664.0 229.0 664.6 227.9 666.0 227.0C667.4 226.1 669.8 227.6 671.0 226.0C672.2 224.4 672.6 219.7 673.5 217.5C674.4 215.3 675.6 215.4 676.5 213.0C677.4 210.6 678.6 204.7 679.0 203.0" stroke="#28ff20" stroke-width="2.2" opacity="0.65"/>
<path d="M553.0 228.0C553.7 229.5 555.6 234.1 557.0 237.0C558.4 239.9 560.3 242.7 561.5 245.5C562.7 248.3 563.6 252.6 564.0 254.0" stroke="#b0ff00" stroke-width="1.8" opacity="0.8"/>
<path d="M657.0 242.0C657.8 240.3 660.5 234.3 662.0 232.0C663.5 229.7 664.7 228.8 666.0 228.0C667.3 227.2 669.3 227.6 670.0 227.5" stroke="#80ff00" stroke-width="2.4" opacity="0.8"/>
<path d="M673.3 216.0 L673.8 219.0" stroke="#d8f800" stroke-width="1.6"/>
</g>
<g filter="url(#b2)"><path d="M318 376L324 356L331 344L336 338V350L330 362L326 376Z" fill="#e4f000" opacity="0.7"/></g>
<rect x="334" y="300" width="1.4" height="52" fill="#a8ff00" opacity="0.7"/>
<rect x="326.5" y="314" width="1.2" height="5" fill="#c8f800" opacity="0.85"/>
<rect x="328.5" y="311" width="1.2" height="5" fill="#d8f400" opacity="0.85"/>
<rect x="331" y="318" width="1.2" height="7" fill="#b8ff00" opacity="0.85"/>
<rect x="323" y="330" width="1" height="8" fill="#a0ff00" opacity="0.85"/>
<rect x="321" y="348" width="1.2" height="9" fill="#e8f000" opacity="0.85"/>
<rect x="324.5" y="342" width="1.2" height="8" fill="#d8f400" opacity="0.85"/>
<rect x="329" y="336" width="1.2" height="7" fill="#c8f800" opacity="0.85"/>
<g fill="none" stroke="#20ff20" stroke-width="1.2" opacity="0.7"><path d="M372.5 292L351 358M375 292L387 358M372 300L362 358M375 305L380 358"/></g>
<g fill="none" stroke="#20ff20" stroke-width="1.2" opacity="0.6"><path d="M531 290L528 358M536 290L547 358M514 338L508 358M516 338L524 358"/></g>
<rect x="240" y="327" width="1.4" height="5" fill="#ffe000"/>
<rect x="243" y="326" width="1.4" height="6" fill="#f0f000"/>
<rect x="247.5" y="334" width="3" height="8" fill="#c0f800"/>
<rect x="252.5" y="337" width="2.6" height="6" fill="#f8e800"/>
<rect x="261.5" y="348" width="1.4" height="3" fill="#fff000"/>
<rect x="272.5" y="354" width="1" height="3" fill="#f0f000"/>
<rect x="278" y="354" width="2" height="5" fill="#ffc000"/>
<rect x="281" y="354.5" width="1.5" height="4.5" fill="#ffb000"/>
<rect x="283.5" y="354" width="2" height="5" fill="#ffc000"/>
<rect x="287" y="350" width="1.2" height="4" fill="#f0f000"/>
<rect x="267" y="364" width="2" height="5" fill="#ffe000"/>
<rect x="271" y="365" width="1.2" height="4" fill="#ffd000"/>
<rect x="275" y="365" width="1.6" height="5" fill="#ffb000"/>
<rect x="279.5" y="365" width="2.6" height="5" fill="#ffb800"/>
<rect x="298.5" y="348" width="1" height="4" fill="#ffd000"/>
<rect x="301" y="346" width="1.2" height="4" fill="#ffa000"/>
<rect x="303.5" y="345" width="1" height="3" fill="#ffc000"/>
<rect x="306" y="343" width="1.2" height="5" fill="#ffe000"/>
<rect x="308" y="343" width="4.5" height="5.5" fill="#fff000"/>
<rect x="313" y="336" width="2.6" height="4" fill="#ff5000"/>
<rect x="313" y="341" width="3" height="5" fill="#f8f000"/>
<rect x="312.5" y="350" width="3" height="4" fill="#ffe000"/>
<g filter="url(#b2)"><path d="M371.5 292H375L384 360H356Z" fill="#00ff30" opacity="0.6"/></g>
<rect x="368.3" y="262" width="1.2" height="96" fill="#a0ff00"/><rect x="370.4" y="300" width="1.2" height="58" fill="#d0ff00"/>
<rect x="352.4" y="335" width="3" height="3" fill="#a0ff00"/>
<rect x="351.4" y="346" width="6" height="4" fill="#90ff00"/>
<rect x="365" y="333" width="2.2" height="7" fill="#fff000"/>
<rect x="368" y="331" width="15" height="4.6" fill="#fff000"/>
<rect x="368" y="339" width="15" height="3.6" fill="#f4f400"/>
<rect x="375.5" y="293.5" width="2.4" height="3.6" fill="#c0ff00"/>
<rect x="370" y="294" width="5" height="2" fill="#60ff00"/>
<g filter="url(#b2)"><path d="M530 288H536L545 360H528Z" fill="#00ff28" opacity="0.7"/><path d="M513 342H517L523 360H509Z" fill="#00ff40" opacity="0.45"/></g>
<rect x="529.2" y="288" width="1.4" height="70" fill="#80ff00"/>
<rect x="512" y="331.2" width="5" height="4.9" fill="#ffc400"/>
<rect x="519.4" y="333.5" width="6" height="3.5" fill="#20ff20"/>
<rect x="529.2" y="329" width="1.6" height="3.5" fill="#ffe800"/>
<rect x="529.2" y="335" width="1.8" height="2.6" fill="#fff000"/>
<rect x="529.2" y="346" width="2.2" height="5" fill="#ffe000"/>
<rect x="533" y="341.5" width="19" height="5.5" fill="#f0f400"/>
<rect x="535" y="343" width="10" height="3" fill="#ffd000"/>
<rect x="533" y="333" width="8" height="7" fill="#b0ff00"/>
<g filter="url(#b2)"><path d="M676 330H684L687 376H669Z" fill="#00ff30" opacity="0.8"/></g>
<rect x="678" y="354.8" width="3" height="4" fill="#c8ff00"/>
<rect x="677.5" y="337" width="1.2" height="6" fill="#d0ff00"/>
<rect x="676.5" y="364" width="1" height="4" fill="#c0ff00"/>
<rect x="679" y="364" width="1" height="4" fill="#c0ff00"/>
<rect x="668" y="344" width="2.4" height="2.6" fill="#20ff20"/>
<rect x="672" y="372" width="1" height="3" fill="#e0f000"/>
</g>
<g id="axes1" shape-rendering="crispEdges">
<rect x="219" y="197" width="470" height="1" fill="#000"/>
<rect x="219" y="377" width="470" height="1" fill="#000"/>
<rect x="219" y="197" width="1" height="181" fill="#000"/>
<rect x="688" y="197" width="1" height="181" fill="#000"/>
<rect x="208" y="374" width="11" height="1" fill="#000"/>
<rect x="214" y="344" width="5" height="1" fill="#000"/>
<rect x="214" y="326" width="5" height="1" fill="#000"/>
<rect x="214" y="313" width="5" height="1" fill="#000"/>
<rect x="214" y="303" width="5" height="1" fill="#000"/>
<rect x="214" y="295" width="5" height="1" fill="#000"/>
<rect x="214" y="288" width="5" height="1" fill="#000"/>
<rect x="214" y="283" width="5" height="1" fill="#000"/>
<rect x="214" y="277" width="5" height="1" fill="#000"/>
<rect x="208" y="273" width="11" height="1" fill="#000"/>
<rect x="214" y="242" width="5" height="1" fill="#000"/>
<rect x="214" y="224" width="5" height="1" fill="#000"/>
<rect x="214" y="212" width="5" height="1" fill="#000"/>
<rect x="214" y="202" width="5" height="1" fill="#000"/>
<rect x="220" y="378" width="1" height="5" fill="#000"/>
<rect x="238" y="378" width="1" height="11" fill="#000"/>
<rect x="256" y="378" width="1" height="5" fill="#000"/>
<rect x="274" y="378" width="1" height="5" fill="#000"/>
<rect x="292" y="378" width="1" height="5" fill="#000"/>
<rect x="310" y="378" width="1" height="5" fill="#000"/>
<rect x="328" y="378" width="1" height="5" fill="#000"/>
<rect x="346" y="378" width="1" height="5" fill="#000"/>
<rect x="364" y="378" width="1" height="5" fill="#000"/>
<rect x="382" y="378" width="1" height="5" fill="#000"/>
<rect x="400" y="378" width="1" height="5" fill="#000"/>
<rect x="418" y="378" width="1" height="5" fill="#000"/>
<rect x="436" y="378" width="1" height="5" fill="#000"/>
<rect x="454" y="378" width="1" height="11" fill="#000"/>
<rect x="472" y="378" width="1" height="5" fill="#000"/>
<rect x="490" y="378" width="1" height="5" fill="#000"/>
<rect x="508" y="378" width="1" height="5" fill="#000"/>
<rect x="526" y="378" width="1" height="5" fill="#000"/>
<rect x="544" y="378" width="1" height="5" fill="#000"/>
<rect x="562" y="378" width="1" height="5" fill="#000"/>
<rect x="580" y="378" width="1" height="5" fill="#000"/>
<rect x="598" y="378" width="1" height="5" fill="#000"/>
<rect x="616" y="378" width="1" height="5" fill="#000"/>
<rect x="634" y="378" width="1" height="5" fill="#000"/>
<rect x="652" y="378" width="1" height="5" fill="#000"/>
<rect x="670" y="378" width="1" height="11" fill="#000"/>
<rect x="688" y="378" width="1" height="5" fill="#000"/>
</g>
<g id="labels1">
<text y="186.7" xml:space="preserve"><tspan x="316.6" textLength="126.4">RBSP-A/EMFISIS</tspan><tspan x="443" textLength="9.6">  </tspan><tspan x="452.6" textLength="138.6">HFR Spectra Data</tspan></text>
<text x="0" y="0" text-anchor="middle" transform="translate(161,287.5) rotate(-90)">Hz</text>
<text x="173.5" y="282.8" text-anchor="start">10</text>
<text x="193.2" y="274.9" text-anchor="start">5</text>
<text x="173.5" y="383.8" text-anchor="start">10</text>
<text x="193.2" y="375.9" text-anchor="start">4</text>
<text x="215.3" y="408.6" text-anchor="start" textLength="45.2">00:00</text>
<text x="215.6" y="424.8" text-anchor="start" textLength="91">2012-12-02</text>
<text x="647.6" y="408.6" text-anchor="start" textLength="45.2">00:00</text>
<text x="647.9" y="424.8" text-anchor="start" textLength="91.8">2012-12-03</text>
<text x="431.3" y="408.6" text-anchor="start" textLength="45.2">12:00</text>
</g>
<defs><linearGradient id="cb" x1="0" y1="1" x2="0" y2="0"><stop offset="0" stop-color="#000089"/><stop offset="0.118" stop-color="#0000ff"/><stop offset="0.247" stop-color="#00ffff"/><stop offset="0.494" stop-color="#00ff00"/><stop offset="0.635" stop-color="#ffff00"/><stop offset="0.753" stop-color="#ffb900"/><stop offset="0.867" stop-color="#ff5400"/><stop offset="1" stop-color="#ff0000"/></linearGradient></defs>
<g id="colorbar" shape-rendering="crispEdges">
<rect x="704" y="198" width="16" height="179" fill="url(#cb)"/>
<rect x="720" y="198" width="1" height="180" fill="#000"/>
<rect x="704" y="377" width="28" height="1" fill="#000"/>
<rect x="721" y="363" width="5" height="1" fill="#000"/>
<rect x="721" y="350" width="11" height="1" fill="#000"/>
<rect x="721" y="337" width="5" height="1" fill="#000"/>
<rect x="721" y="323" width="11" height="1" fill="#000"/>
<rect x="721" y="310" width="5" height="1" fill="#000"/>
<rect x="721" y="297" width="11" height="1" fill="#000"/>
<rect x="721" y="284" width="5" height="1" fill="#000"/>
<rect x="721" y="270" width="11" height="1" fill="#000"/>
<rect x="721" y="257" width="5" height="1" fill="#000"/>
<rect x="721" y="244" width="11" height="1" fill="#000"/>
<rect x="721" y="230" width="5" height="1" fill="#000"/>
<rect x="721" y="217" width="11" height="1" fill="#000"/>
<rect x="721" y="204" width="5" height="1" fill="#000"/>
</g>
<g id="cblabels">
<text x="736.5" y="386.8" text-anchor="start">10</text>
<text x="756.3" y="379.0" text-anchor="start" textLength="25.6">-22</text>
<text x="736.5" y="359.8" text-anchor="start">10</text>
<text x="756.3" y="352.0" text-anchor="start" textLength="25.6">-20</text>
<text x="736.5" y="332.8" text-anchor="start">10</text>
<text x="756.3" y="325.0" text-anchor="start" textLength="25.6">-18</text>
<text x="736.5" y="306.8" text-anchor="start">10</text>
<text x="756.3" y="299.0" text-anchor="start" textLength="25.6">-16</text>
<text x="736.5" y="279.8" text-anchor="start">10</text>
<text x="756.3" y="272.0" text-anchor="start" textLength="25.6">-14</text>
<text x="736.5" y="253.8" text-anchor="start">10</text>
<text x="756.3" y="246.0" text-anchor="start" textLength="25.6">-12</text>
<text x="736.5" y="226.8" text-anchor="start">10</text>
<text x="756.3" y="219.0" text-anchor="start" textLength="25.6">-10</text>
<text x="0" y="0" text-anchor="middle" transform="translate(805.3,288.1) rotate(-90)" textLength="102.8">V^2/m^2/Hz</text>
</g>
<g id="axes2" shape-rendering="crispEdges">
<rect x="219" y="440" width="470" height="1" fill="#000"/>
<rect x="219" y="621" width="470" height="1" fill="#000"/>
<rect x="219" y="440" width="1" height="182" fill="#000"/>
<rect x="688" y="440" width="1" height="182" fill="#000"/>
<rect x="214" y="441" width="5" height="1" fill="#000"/>
<rect x="208" y="451" width="11" height="1" fill="#000"/>
<rect x="214" y="463" width="5" height="1" fill="#000"/>
<rect x="208" y="475" width="11" height="1" fill="#000"/>
<rect x="214" y="487" width="5" height="1" fill="#000"/>
<rect x="208" y="500" width="11" height="1" fill="#000"/>
<rect x="214" y="514" width="5" height="1" fill="#000"/>
<rect x="208" y="529" width="11" height="1" fill="#000"/>
<rect x="214" y="545" width="5" height="1" fill="#000"/>
<rect x="208" y="562" width="11" height="1" fill="#000"/>
<rect x="214" y="580" width="5" height="1" fill="#000"/>
<rect x="208" y="599" width="11" height="1" fill="#000"/>
<rect x="214" y="621" width="5" height="1" fill="#000"/>
<rect x="220" y="622" width="1" height="5" fill="#000"/>
<rect x="238" y="622" width="1" height="11" fill="#000"/>
<rect x="256" y="622" width="1" height="5" fill="#000"/>
<rect x="274" y="622" width="1" height="5" fill="#000"/>
<rect x="292" y="622" width="1" height="5" fill="#000"/>
<rect x="310" y="622" width="1" height="5" fill="#000"/>
<rect x="328" y="622" width="1" height="5" fill="#000"/>
<rect x="346" y="622" width="1" height="5" fill="#000"/>
<rect x="364" y="622" width="1" height="5" fill="#000"/>
<rect x="382" y="622" width="1" height="5" fill="#000"/>
<rect x="400" y="622" width="1" height="5" fill="#000"/>
<rect x="418" y="622" width="1" height="5" fill="#000"/>
<rect x="436" y="622" width="1" height="5" fill="#000"/>
<rect x="454" y="622" width="1" height="11" fill="#000"/>
<rect x="472" y="622" width="1" height="5" fill="#000"/>
<rect x="490" y="622" width="1" height="5" fill="#000"/>
<rect x="508" y="622" width="1" height="5" fill="#000"/>
<rect x="526" y="622" width="1" height="5" fill="#000"/>
<rect x="544" y="622" width="1" height="5" fill="#000"/>
<rect x="562" y="622" width="1" height="5" fill="#000"/>
<rect x="580" y="622" width="1" height="5" fill="#000"/>
<rect x="598" y="622" width="1" height="5" fill="#000"/>
<rect x="616" y="622" width="1" height="5" fill="#000"/>
<rect x="634" y="622" width="1" height="5" fill="#000"/>
<rect x="652" y="622" width="1" height="5" fill="#000"/>
<rect x="670" y="622" width="1" height="11" fill="#000"/>
<rect x="688" y="622" width="1" height="5" fill="#000"/>
</g>
<g id="curve">
<path d="M220.2,527.4 220.3,543.0 220.4,501.0 220.6,521.7 220.7,527.0 220.8,530.8 221.0,513.4 221.1,522.0 221.2,519.7 221.4,510.9 221.5,508.6 221.6,515.2 221.7,505.4 221.9,507.7 222.0,499.5 222.1,506.1 222.3,503.2 222.4,514.1 222.5,515.2 222.7,496.0 222.8,502.1 222.9,500.1 223.0,490.1 223.2,502.0 223.3,484.8 223.4,509.4 223.6,503.2 223.7,503.2 223.8,505.0 224.0,498.0 224.1,494.3 224.2,494.0 224.3,510.3 224.5,501.2 224.6,505.7 224.7,496.7 224.9,502.8 225.0,485.4 225.1,491.4 225.3,476.8 225.4,497.7 225.5,489.6 225.6,496.1 225.8,490.7 225.9,495.0 226.0,481.3 226.2,497.1 226.3,500.6 226.4,490.0 226.6,492.2 226.7,504.9 226.8,485.1 226.9,487.5 227.1,474.4 227.2,488.5 227.3,480.0 227.5,499.6 227.6,469.3 227.7,476.0 227.9,484.4 228.0,489.6 228.1,479.7 228.2,481.2 228.4,489.4 228.5,495.3 228.6,473.2 228.8,478.6 228.9,473.3 229.0,483.2 229.2,496.6 229.3,487.5 229.4,475.4 229.5,498.2 229.7,495.7 229.8,473.4 229.9,482.6 230.1,470.6 230.2,488.2 230.3,487.4 230.5,492.8 230.6,482.6 230.7,488.2 230.8,473.5 231.0,479.5 231.1,481.0 231.2,480.5 231.4,482.1 231.5,489.4 231.6,474.0 231.8,486.7 231.9,478.1 232.0,472.4 232.1,478.1 232.3,481.7 232.4,471.9 232.5,475.3 232.7,471.0 232.8,486.4 232.9,483.3 233.1,455.6 233.2,463.5 233.3,460.5 233.4,477.8 233.6,480.4 233.7,486.7 233.8,490.2 234.0,484.0 234.1,483.8 234.2,482.6 234.4,455.1 234.5,486.3 234.6,488.9 234.7,473.7 234.9,503.5 235.0,480.4 235.1,474.6 235.3,479.7 235.4,496.3 235.5,477.6 235.7,478.2 235.8,495.8 235.9,490.5 236.0,495.7 236.2,478.8 236.3,508.4 236.4,489.3 236.6,499.7 236.7,501.3 236.8,488.8 237.0,487.5 237.1,454.5 237.2,481.6 237.3,490.8 237.5,482.6 237.6,500.5 237.7,484.2 237.9,501.8 238.0,493.5 238.1,489.6 238.3,490.5 238.4,492.5 238.5,492.6 238.6,493.4 238.8,512.8 238.9,506.8 239.0,483.8 239.2,489.9 239.3,494.8 239.4,493.9 239.6,490.3 239.7,493.2 239.8,496.0 239.9,489.6 240.1,488.6 240.2,498.5 240.3,508.4 240.5,492.6 240.6,498.7 240.7,492.7 240.9,497.7 241.0,503.1 241.1,496.9 241.2,500.4 241.4,503.2 241.5,496.9 241.6,507.6 241.8,519.3 241.9,515.5 242.0,500.5 242.2,506.7 242.3,503.4 242.4,505.8 242.5,494.8 242.7,512.9 242.8,518.0 242.9,506.5 243.1,503.6 243.2,506.2 243.3,500.2 243.5,512.8 243.6,516.7 243.7,512.6 243.8,524.6 244.0,511.8 244.1,530.3 244.2,520.4 244.4,516.4 244.5,531.7 244.6,524.8 244.8,529.0 244.9,510.9 245.0,516.2 245.1,522.9 245.3,512.8 245.4,525.8 245.5,522.7 245.7,508.1 245.8,519.1 245.9,525.6 246.1,537.2 246.2,537.9 246.3,525.9 246.4,528.4 246.6,530.5 246.7,520.7 246.8,530.4 247.0,528.7 247.1,526.7 247.2,519.7 247.4,532.3 247.5,532.6 247.6,527.1 247.7,517.5 247.9,528.5 248.0,525.1 248.1,529.2 248.3,536.6 248.4,528.1 248.5,525.7 248.7,534.8 248.8,529.1 248.9,536.5 249.0,531.0 249.2,532.3 249.3,522.6 249.4,537.4 249.6,530.2 249.7,550.3 249.8,536.0 250.0,530.2 250.1,524.9 250.2,536.9 250.3,532.9 250.5,530.2 250.6,536.1 250.7,541.7 250.9,552.2 251.0,542.0 251.1,527.1 251.3,540.9 251.4,540.2 251.5,546.6 251.6,520.8 251.8,542.2 251.9,537.7 252.0,543.0 252.2,539.8 252.3,550.6 252.4,539.0 252.6,531.5 252.7,542.6 252.8,539.4 252.9,540.5 253.1,533.5 253.2,542.3 253.3,550.4 253.5,545.6 253.6,539.6 253.7,531.9 253.9,539.3 254.0,543.8 254.1,540.6 254.2,548.9 254.4,543.0 254.5,534.9 254.6,541.7 254.8,550.0 254.9,551.2 255.0,545.5 255.2,554.7 255.3,545.0 255.4,548.2 255.5,546.6 255.7,540.4 255.8,539.8 255.9,542.8 256.1,550.3 256.2,549.0 256.3,542.4 256.5,552.6 256.6,552.7 256.7,547.4 256.8,539.3 257.0,549.4 257.1,557.4 257.2,547.8 257.4,550.8 257.5,549.7 257.6,548.4 257.8,553.0 257.9,547.3 258.0,552.1 258.1,555.1 258.3,547.3 258.4,555.5 258.5,552.1 258.7,549.7 258.8,562.6 258.9,552.6 259.1,544.4 259.2,561.4 259.3,556.7 259.4,553.1 259.6,564.3 259.7,550.3 259.8,554.7 260.0,560.4 260.1,557.4 260.2,549.5 260.4,566.5 260.5,559.9 260.6,565.6 260.7,557.9 260.9,564.0 261.0,557.9 261.1,562.6 261.3,562.0 261.4,559.2 261.5,558.7 261.7,563.8 261.8,557.5 261.9,557.6 262.0,568.1 262.2,559.4 262.3,555.1 262.4,559.5 262.6,559.9 262.7,559.0 262.8,562.8 263.0,559.3 263.1,566.0 263.2,549.3 263.3,557.2 263.5,559.5 263.6,565.5 263.7,561.0 263.9,567.1 264.0,557.7 264.1,558.5 264.3,559.5 264.4,561.9 264.5,551.7 264.6,557.5 264.8,556.4 264.9,557.3 265.0,567.6 265.2,563.9 265.3,559.3 265.4,555.2 265.6,558.3 265.7,565.5 265.8,556.2 265.9,559.6 266.1,556.7 266.2,558.6 266.3,552.0 266.5,562.8 266.6,557.8 266.7,557.3 266.9,559.8 267.0,564.5 267.1,557.8 267.2,562.5 267.4,566.6 267.5,560.3 267.6,562.2 267.8,564.5 267.9,562.5 268.0,562.7 268.2,560.6 268.3,561.6 268.4,564.9 268.5,556.2 268.7,560.3 268.8,565.0 268.9,565.5 269.1,559.3 269.2,562.2 269.3,567.1 269.5,569.8 269.6,572.4 269.7,571.1 269.8,562.8 270.0,568.0 270.1,562.2 270.2,565.9 270.4,560.4 270.5,562.5 270.6,571.2 270.8,566.3 270.9,572.3 271.0,568.7 271.1,563.9 271.3,567.0 271.4,572.4 271.5,567.4 271.7,565.0 271.8,570.3 271.9,564.6 272.1,565.5 272.2,570.4 272.3,572.3 272.4,570.2 272.6,567.0 272.7,569.4 272.8,569.6 273.0,572.0 273.1,566.3 273.2,569.0 273.4,570.2 273.5,563.8 273.6,570.2 273.7,569.9 273.9,577.9 274.0,575.2 274.1,573.5 274.3,566.4 274.4,568.7 274.5,574.7 274.7,570.1 274.8,578.0 274.9,575.3 275.0,571.3 275.2,566.5 275.3,572.4 275.4,566.7 275.6,572.6 275.7,573.5 275.8,573.2 276.0,566.0 276.1,573.4 276.2,571.0 276.3,580.6 276.5,577.7 276.6,578.7 276.7,569.2 276.9,571.1 277.0,572.8 277.1,568.6 277.3,570.2 277.4,570.6 277.5,570.9 277.6,569.6 277.8,566.8 277.9,567.1 278.0,569.8 278.2,571.3 278.3,567.7 278.4,576.7 278.6,570.1 278.7,571.6 278.8,569.4 278.9,572.5 279.1,579.3 279.2,572.6 279.3,571.0 279.5,567.2 279.6,577.7 279.7,568.5 279.9,581.7 280.0,573.9 280.1,573.2 280.2,569.4 280.4,580.8 280.5,572.2 280.6,574.7 280.8,565.5 280.9,573.7 281.0,571.8 281.2,565.9 281.3,579.1 281.4,569.4 281.5,578.0 281.7,563.9 281.8,576.8 281.9,573.3 282.1,568.8 282.2,571.3 282.3,568.4 282.5,584.3 282.6,571.3 282.7,575.1 282.8,569.1 283.0,568.9 283.1,569.7 283.2,564.9 283.4,570.7 283.5,571.4 283.6,569.1 283.8,575.7 283.9,575.1 284.0,573.0 284.1,572.2 284.3,573.5 284.4,568.8 284.5,571.9 284.7,571.5 284.8,563.1 284.9,571.6 285.1,571.5 285.2,569.3 285.3,575.6 285.4,568.9 285.6,574.0 285.7,579.2 285.8,571.0 286.0,570.5 286.1,574.5 286.2,568.1 286.4,572.9 286.5,570.8 286.6,571.4 286.7,567.4 286.9,568.4 287.0,566.7 287.1,568.4 287.3,572.1 287.4,571.3 287.5,567.9 287.7,565.1 287.8,574.0 287.9,574.4 288.0,570.3 288.2,571.4 288.3,566.8 288.4,571.1 288.6,567.4 288.7,572.2 288.8,579.2 289.0,569.4 289.1,576.0 289.2,572.6 289.3,569.4 289.5,566.0 289.6,570.1 289.7,567.6 289.9,583.3 290.0,571.5 290.1,570.1 290.3,569.2 290.4,571.4 290.5,569.3 290.6,578.2 290.8,567.0 290.9,576.6 291.0,566.3 291.2,576.6 291.3,568.6 291.4,570.9 291.6,576.9 291.7,577.1 291.8,567.7 291.9,571.8 292.1,567.9 292.2,574.5 292.3,568.4 292.5,566.7 292.6,570.4 292.7,569.5 292.9,563.2 293.0,567.9 293.1,575.8 293.2,567.5 293.4,565.6 293.5,567.3 293.6,570.2 293.8,574.6 293.9,567.5 294.0,575.0 294.2,577.4 294.3,577.2 294.4,579.0 294.5,571.4 294.7,571.5 294.8,570.5 294.9,578.4 295.1,562.3 295.2,572.0 295.3,571.8 295.5,567.4 295.6,569.6 295.7,572.1 295.8,578.8 296.0,568.0 296.1,570.7 296.2,569.0 296.4,575.6 296.5,564.0 296.6,561.6 296.8,568.4 296.9,556.8 297.0,577.3 297.1,571.7 297.3,573.6 297.4,571.5 297.5,568.3 297.7,571.4 297.8,563.2 297.9,573.8 298.1,562.8 298.2,568.9 298.3,567.6 298.4,568.4 298.6,564.3 298.7,573.1 298.8,579.7 299.0,572.5 299.1,562.5 299.2,570.4 299.4,573.1 299.5,569.3 299.6,563.0 299.7,567.9 299.9,568.7 300.0,563.5 300.1,547.5 300.3,562.0 300.4,560.1 300.5,566.2 300.7,557.7 300.8,567.7 300.9,566.9 301.0,549.4 301.2,563.7 301.3,567.1 301.4,554.5 301.6,575.1 301.7,561.5 301.8,572.6 302.0,565.3 302.1,559.3 302.2,558.3 302.3,546.6 302.5,552.0 302.6,564.1 302.7,558.1 302.9,557.2 303.0,561.9 303.1,570.4 303.3,563.4 303.4,558.1 303.5,555.0 303.6,548.9 303.8,562.1 303.9,559.5 304.0,563.0 304.2,563.0 304.3,566.8 304.4,559.9 304.6,553.7 304.7,548.8 304.8,560.3 304.9,540.9 305.1,552.1 305.2,550.2 305.3,557.8 305.5,552.7 305.6,552.8 305.7,550.9 305.9,544.0 306.0,551.1 306.1,561.3 306.2,547.5 306.4,558.7 306.5,550.0 306.6,549.0 306.8,549.9 306.9,553.4 307.0,554.3 307.2,554.7 307.3,556.3 307.4,546.9 307.5,561.4 307.7,549.6 307.8,556.5 307.9,551.8 308.1,553.1 308.2,560.2 308.3,569.4 308.5,549.1 308.6,548.1 308.7,557.2 308.8,556.1 309.0,549.7 309.1,560.3 309.2,543.6 309.4,542.7 309.5,555.4 309.6,552.3 309.8,555.0 309.9,554.5 310.0,558.7 310.1,549.7 310.3,556.2 310.4,558.2 310.5,562.3 310.7,554.0 310.8,557.0 310.9,552.8 311.1,564.1 311.2,553.4 311.3,554.3 311.4,551.5 311.6,546.4 311.7,554.1 311.8,558.8 312.0,567.4 312.1,554.5 312.2,560.0 312.4,543.5 312.5,559.1 312.6,562.7 312.7,561.3 312.9,549.0 313.0,550.3 313.1,556.4 313.3,562.6 313.4,557.3 313.5,550.8 313.7,557.5 313.8,564.9 313.9,557.2 314.0,550.8 314.2,567.3 314.3,570.2 314.4,558.6 314.6,562.3 314.7,561.5 314.8,557.1 315.0,576.9 315.1,571.5 315.2,565.2 315.3,554.7 315.5,562.1 315.6,554.4 315.7,563.8 315.9,564.9 316.0,576.5 316.1,569.7 316.3,557.8 316.4,565.6 316.5,572.8 316.6,551.5 316.8,559.8 316.9,565.7 317.0,553.3 317.2,556.1 317.3,559.0 317.4,559.6 317.6,548.6 317.7,550.4 317.8,550.0 317.9,543.6 318.1,562.0 318.2,550.8 318.3,551.2 318.5,560.0 318.6,546.7 318.7,561.0 318.9,548.4 319.0,548.8 319.1,556.4 319.2,555.5 319.4,561.2 319.5,546.1 319.6,554.1 319.8,550.1 319.9,555.2 320.0,555.2 320.2,539.7 320.3,548.0 320.4,541.8 320.5,538.6 320.7,541.2 320.8,547.7 320.9,536.2 321.1,544.7 321.2,548.8 321.3,550.5 321.5,536.5 321.6,547.9 321.7,541.1 321.8,536.3 322.0,534.6 322.1,542.2 322.2,551.4 322.4,543.1 322.5,528.9 322.6,545.2 322.8,534.3 322.9,531.1 323.0,539.4 323.1,534.5 323.3,533.3 323.4,530.8 323.5,532.5 323.7,535.0 323.8,534.2 323.9,538.3 324.1,535.3 324.2,534.4 324.3,540.0 324.4,527.1 324.6,525.5 324.7,522.0 324.8,518.6 325.0,530.6 325.1,527.3 325.2,520.5 325.4,530.1 325.5,514.3 325.6,522.2 325.7,523.5 325.9,524.2 326.0,523.3 326.1,516.1 326.3,518.6 326.4,523.3 326.5,517.3 326.7,511.0 326.8,529.0 326.9,514.5 327.0,514.9 327.2,518.1 327.3,521.7 327.4,508.2 327.6,508.0 327.7,519.5 327.8,517.2 328.0,523.2 328.1,519.4 328.2,498.0 328.3,504.2 328.5,524.5 328.6,519.5 328.7,499.3 328.9,520.0 329.0,512.2 329.1,518.2 329.3,511.7 329.4,511.6 329.5,512.2 329.6,509.0 329.8,511.3 329.9,518.8 330.0,515.4 330.2,515.0 330.3,517.9 330.4,510.1 330.6,514.9 330.7,510.7 330.8,514.3 330.9,517.4 331.1,517.9 331.2,509.7 331.3,511.7 331.5,499.5 331.6,504.6 331.7,504.8 331.9,511.5 332.0,501.6 332.1,504.9 332.2,508.9 332.4,512.7 332.5,512.7 332.6,498.1 332.8,502.7 332.9,515.3 333.0,502.0 333.2,484.1 333.3,508.2 333.4,500.5 333.5,499.5 333.7,511.8 333.8,518.5 333.9,499.5 334.1,514.3 334.2,515.4 334.3,490.7 334.5,502.4 334.6,499.8 334.7,499.7 334.8,489.7 335.0,508.3 335.1,486.2 335.2,498.0 335.4,490.3 335.5,496.9 335.6,469.3 335.8,488.5 335.9,485.5 336.0,477.1 336.1,482.7 336.3,459.0 336.4,482.4 336.5,467.2 336.7,473.1 336.8,460.3 336.9,473.0 337.1,468.9 337.2,490.2 337.3,484.8 337.4,481.6 337.6,488.9 337.7,483.6 337.8,485.5 338.0,488.0 338.1,490.2 338.2,475.5 338.4,477.2 338.5,494.1 338.6,495.6 338.7,481.4 338.9,479.8 339.0,485.6 339.1,478.6 339.3,496.8 339.4,480.4 339.5,483.0 339.7,468.7 339.8,490.9 339.9,477.7 340.0,495.0 340.2,479.8 340.3,490.0 340.4,491.4 340.6,488.1 340.7,488.2 340.8,477.3 341.0,478.3 341.1,490.7 341.2,484.3 341.3,493.3 341.5,483.8 341.6,501.4 341.7,474.0 341.9,502.9 342.0,490.0 342.1,471.3 342.3,475.3 342.4,487.6 342.5,489.4 342.6,492.6 342.8,509.3 342.9,493.6 343.0,486.3 343.2,482.1 343.3,488.7 343.4,478.7 343.6,486.2 343.7,494.7 343.8,486.6 343.9,500.4 344.1,483.6 344.2,499.0 344.3,504.6 344.5,518.7 344.6,485.9 344.7,482.6 344.9,481.1 345.0,490.2 345.1,475.1 345.2,477.2 345.4,481.2 345.5,483.0 345.6,488.2 345.8,466.3 345.9,502.5 346.0,502.6 346.2,508.2 346.3,467.9 346.4,507.4 346.5,492.5 346.7,509.8 346.8,508.5 346.9,489.6 347.1,503.4 347.2,475.1 347.3,498.7 347.5,494.8 347.6,475.9 347.7,496.6 347.8,493.0 348.0,464.1 348.1,477.0 348.2,456.9 348.4,477.7 348.5,503.3 348.6,496.9 348.8,490.2 348.9,486.4 349.0,496.2 349.1,504.8 349.3,489.6 349.4,505.3 349.5,467.2 349.7,480.6 349.8,492.6 349.9,481.0 350.1,501.0 350.2,483.5 350.3,491.1 350.4,516.4 350.6,479.1 350.7,500.0 350.8,491.6 351.0,486.3 351.1,482.7 351.2,472.3 351.4,498.9 351.5,490.6 351.6,501.5 351.7,482.8 351.9,502.9 352.0,484.9 352.1,478.2 352.3,487.7 352.4,509.1 352.5,500.5 352.7,497.6 352.8,490.2 352.9,521.2 353.0,482.2 353.2,509.5 353.3,503.0 353.4,514.3 353.6,510.1 353.7,510.5 353.8,498.3 354.0,491.2 354.1,506.5 354.2,512.9 354.3,492.2 354.5,496.6 354.6,494.2 354.7,497.0 354.9,503.2 355.0,493.8 355.1,492.6 355.3,500.3 355.4,517.9 355.5,519.0 355.6,514.8 355.8,508.8 355.9,517.2 356.0,488.9 356.2,487.1 356.3,520.2 356.4,537.4 356.6,509.2 356.7,537.0 356.8,504.3 356.9,517.1 357.1,515.2 357.2,531.8 357.3,508.5 357.5,532.0 357.6,514.9 357.7,512.3 357.9,509.5 358.0,520.3 358.1,531.3 358.2,536.1 358.4,527.4 358.5,525.7 358.6,520.7 358.8,554.3 358.9,535.1 359.0,549.5 359.2,548.8 359.3,536.8 359.4,552.1 359.5,544.6 359.7,549.7 359.8,566.8 359.9,555.4 360.1,560.6 360.2,568.1 360.3,565.5 360.5,564.4 360.6,575.3 360.7,570.5 360.8,576.8" fill="none" stroke="#000" stroke-width="1.05" stroke-linejoin="round"/>
<path d="M373.1,544.6 373.2,545.1 373.4,537.3 373.5,538.7 373.6,529.9 373.8,530.9 373.9,538.5 374.0,523.9 374.2,531.9 374.3,510.0 374.4,512.5 374.5,501.6 374.7,511.4 374.8,503.9 374.9,510.4 375.1,506.3 375.2,511.6 375.3,498.3 375.5,492.9 375.6,492.4 375.7,499.7 375.8,495.8 376.0,495.8 376.1,485.6 376.2,494.3 376.4,482.6 376.5,503.8 376.6,493.9 376.8,491.0 376.9,496.6 377.0,483.5 377.1,493.3 377.3,490.7 377.4,477.6 377.5,482.7 377.7,492.0 377.8,492.3 377.9,479.0 378.1,493.5 378.2,496.9 378.3,489.6 378.4,489.4 378.6,478.6 378.7,478.5 378.8,495.8 379.0,507.0 379.1,484.6 379.2,482.6 379.4,477.3 379.5,494.1 379.6,483.5 379.7,483.7 379.9,484.9 380.0,482.8 380.1,488.5 380.3,480.9 380.4,495.6 380.5,470.2 380.7,487.7 380.8,480.0 380.9,470.7 381.0,486.1 381.2,490.7 381.3,489.9 381.4,476.6 381.6,488.4 381.7,488.7 381.8,493.1 382.0,480.2 382.1,482.5 382.2,478.0 382.3,490.0 382.5,482.2 382.6,479.2 382.7,483.0 382.9,486.7 383.0,485.3 383.1,475.6 383.3,475.8 383.4,487.9 383.5,480.8 383.6,477.0 383.8,467.6 383.9,498.4 384.0,471.8 384.2,485.2 384.3,468.6 384.4,484.4 384.6,477.7 384.7,479.0 384.8,469.1 384.9,473.4 385.1,490.2 385.2,467.8 385.3,476.2 385.5,484.0 385.6,465.9 385.7,487.0 385.9,491.1 386.0,481.3 386.1,493.6 386.2,484.9 386.4,485.2 386.5,482.0 386.6,492.4 386.8,496.2 386.9,465.4 387.0,481.5 387.2,478.3 387.3,468.1 387.4,470.0 387.5,470.0 387.7,480.5 387.8,493.4 387.9,478.8 388.1,459.2 388.2,470.0 388.3,452.1 388.5,456.5 388.6,467.5 388.7,484.8 388.8,492.2 389.0,470.8 389.1,479.8 389.2,478.8 389.4,459.0 389.5,448.5 389.6,449.9 389.8,454.3 389.9,457.9 390.0,458.6 390.1,487.0 390.3,469.6 390.4,463.0 390.5,484.2 390.7,449.4 390.8,490.7 390.9,456.4 391.1,486.4 391.2,485.0 391.3,486.6 391.4,497.3 391.6,495.2 391.7,476.7 391.8,472.1 392.0,483.2 392.1,488.3 392.2,472.8 392.4,486.6 392.5,462.5 392.6,487.7 392.7,496.3 392.9,496.1 393.0,494.8 393.1,497.7 393.3,480.7 393.4,510.3 393.5,508.9 393.7,493.3 393.8,519.5 393.9,518.8 394.0,481.3 394.2,499.3 394.3,492.5 394.4,500.5 394.6,479.4 394.7,492.7 394.8,492.5 395.0,473.9 395.1,487.6 395.2,482.2 395.3,484.5 395.5,470.6 395.6,468.8 395.7,496.5 395.9,453.5 396.0,463.0 396.1,465.0 396.3,448.5 396.4,471.9 396.5,491.1 396.6,478.8 396.8,481.3 396.9,459.4 397.0,478.2 397.2,473.7 397.3,465.1 397.4,462.1 397.6,465.8 397.7,500.3 397.8,483.1 397.9,461.8 398.1,487.7 398.2,474.4 398.3,471.6 398.5,469.6 398.6,493.1 398.7,490.6 398.9,491.3 399.0,475.4 399.1,459.6 399.2,471.3 399.4,469.3 399.5,477.6 399.6,461.8 399.8,479.5 399.9,478.1 400.0,486.6 400.2,476.5 400.3,486.6 400.4,476.4 400.5,493.6 400.7,468.3 400.8,479.4 400.9,471.9 401.1,482.2 401.2,469.1 401.3,467.8 401.5,479.4 401.6,476.3 401.7,500.8 401.8,478.0 402.0,488.8 402.1,490.9 402.2,479.2 402.4,483.7 402.5,501.1 402.6,476.8 402.8,475.9 402.9,479.4 403.0,482.2 403.1,494.2 403.3,495.7 403.4,484.0 403.5,483.5 403.7,491.3 403.8,488.3 403.9,472.9 404.1,493.6 404.2,480.5 404.3,491.8 404.4,496.1 404.6,485.1 404.7,486.1 404.8,506.7 405.0,494.6 405.1,491.1 405.2,489.8 405.4,499.9 405.5,496.3 405.6,490.3 405.7,495.0 405.9,485.0 406.0,493.1 406.1,490.2 406.3,487.3 406.4,493.6 406.5,497.3 406.7,504.5 406.8,503.3 406.9,487.3 407.0,496.3 407.2,493.0 407.3,495.8 407.4,493.4 407.6,492.9 407.7,490.3 407.8,478.8 408.0,488.8 408.1,489.5 408.2,491.9 408.3,493.5 408.5,489.1 408.6,484.0 408.7,496.6 408.9,476.4 409.0,496.1 409.1,490.1 409.3,488.5 409.4,483.1 409.5,488.8 409.6,494.1 409.8,497.4 409.9,486.1 410.0,484.8 410.2,477.7 410.3,483.9 410.4,492.1 410.6,472.5 410.7,481.2 410.8,475.6 410.9,483.7 411.1,484.9 411.2,474.6 411.3,480.2 411.5,487.0 411.6,478.7 411.7,477.6 411.9,500.6 412.0,493.6 412.1,482.4 412.2,480.3 412.4,479.2 412.5,484.7 412.6,476.0 412.8,488.6 412.9,484.6 413.0,478.7 413.2,486.2 413.3,485.8 413.4,469.5 413.5,478.6 413.7,490.4 413.8,493.9 413.9,483.7 414.1,473.2 414.2,483.7 414.3,475.7 414.5,480.3 414.6,477.2 414.7,477.6 414.8,486.2 415.0,485.7 415.1,483.1 415.2,482.5 415.4,474.4 415.5,480.1 415.6,487.7 415.8,489.1 415.9,490.5 416.0,474.1 416.1,485.8 416.3,483.2 416.4,483.7 416.5,480.6 416.7,477.6 416.8,483.4 416.9,487.8 417.1,473.6 417.2,477.4 417.3,492.3 417.4,493.7 417.6,475.7 417.7,485.5 417.8,480.6 418.0,485.2 418.1,485.4 418.2,495.5 418.4,480.4 418.5,491.4 418.6,488.8 418.7,486.8 418.9,490.4 419.0,495.7 419.1,491.5 419.3,484.0 419.4,493.7 419.5,483.5 419.7,485.2 419.8,495.2 419.9,484.1 420.0,482.0 420.2,494.6 420.3,485.2 420.4,491.2 420.6,490.3 420.7,496.3 420.8,481.0 421.0,496.3 421.1,492.3 421.2,481.7 421.3,485.1 421.5,488.0 421.6,491.1 421.7,501.6 421.9,491.6 422.0,490.3 422.1,484.0 422.3,492.4 422.4,491.5 422.5,496.6 422.6,482.0 422.8,495.8 422.9,489.6 423.0,488.0 423.2,490.8 423.3,494.1 423.4,497.2 423.6,494.0 423.7,502.9 423.8,504.6 423.9,495.6 424.1,491.6 424.2,504.3 424.3,497.3 424.5,494.2 424.6,482.3 424.7,497.5 424.9,502.2 425.0,491.8 425.1,494.6 425.2,500.0 425.4,499.2 425.5,491.2 425.6,490.1 425.8,502.2 425.9,495.6 426.0,487.6 426.2,508.3 426.3,502.9 426.4,501.7 426.5,512.0 426.7,486.5 426.8,512.6 426.9,496.4 427.1,492.9 427.2,506.4 427.3,495.7 427.5,508.3 427.6,494.9 427.7,488.1 427.8,502.3 428.0,499.7 428.1,485.9 428.2,502.7 428.4,499.8 428.5,501.2 428.6,494.5 428.8,505.7 428.9,507.6 429.0,500.9 429.1,511.2 429.3,504.3 429.4,497.7 429.5,492.7 429.7,503.9 429.8,496.1 429.9,501.6 430.1,493.2 430.2,497.7 430.3,503.2 430.4,495.6 430.6,499.8 430.7,486.2 430.8,505.8 431.0,508.1 431.1,497.5 431.2,500.9 431.4,514.5 431.5,488.8 431.6,514.8 431.7,494.1 431.9,500.6 432.0,509.1 432.1,505.8 432.3,508.5 432.4,489.4 432.5,491.7 432.7,509.7 432.8,493.6 432.9,496.4 433.0,492.1 433.2,490.0 433.3,500.1 433.4,507.7 433.6,508.6 433.7,503.3 433.8,507.6 434.0,507.9 434.1,507.2 434.2,508.7 434.3,510.3 434.5,502.7 434.6,504.5 434.7,506.8 434.9,488.2 435.0,508.8 435.1,497.5 435.3,490.6 435.4,497.7 435.5,500.5 435.6,511.5 435.8,488.6 435.9,512.9 436.0,497.7 436.2,500.2 436.3,506.0 436.4,501.5 436.6,503.6 436.7,499.3 436.8,499.3 436.9,509.1 437.1,498.3 437.2,507.2 437.3,501.2 437.5,499.3 437.6,503.2 437.7,499.5 437.9,504.8 438.0,490.2 438.1,497.9 438.2,499.4 438.4,491.0 438.5,511.5 438.6,493.1 438.8,518.8 438.9,500.0 439.0,512.3 439.2,501.2 439.3,505.3 439.4,524.7 439.5,498.7 439.7,508.5 439.8,506.0 439.9,504.3 440.1,499.4 440.2,499.0 440.3,498.5 440.5,501.0 440.6,490.6 440.7,490.6 440.8,508.3 441.0,496.0 441.1,498.5 441.2,509.9 441.4,496.7 441.5,487.8 441.6,516.2 441.8,499.7 441.9,501.9 442.0,512.3 442.1,514.3 442.3,498.1 442.4,501.0 442.5,506.2 442.7,497.8 442.8,516.1 442.9,507.7 443.1,514.2 443.2,515.5 443.3,501.1 443.4,493.0 443.6,497.2 443.7,501.6 443.8,511.2 444.0,500.6 444.1,510.0 444.2,516.4 444.4,501.1 444.5,499.7 444.6,502.6 444.7,515.6 444.9,511.2 445.0,508.6 445.1,516.0 445.3,495.9 445.4,517.0 445.5,498.3 445.7,497.2 445.8,509.8 445.9,491.5 446.0,502.1 446.2,497.3 446.3,496.7 446.4,505.1 446.6,505.7 446.7,491.4 446.8,495.1 447.0,498.0 447.1,497.4 447.2,499.9 447.3,502.5 447.5,492.8 447.6,510.8 447.7,493.9 447.9,504.2 448.0,496.2 448.1,497.6 448.3,505.6 448.4,491.0 448.5,491.2 448.6,498.4 448.8,506.6 448.9,498.1 449.0,494.7 449.2,499.5 449.3,497.1 449.4,513.6 449.6,515.4 449.7,497.4 449.8,499.4 449.9,503.7 450.1,487.8 450.2,499.9 450.3,509.7 450.5,511.5 450.6,503.7 450.7,494.9 450.9,500.2 451.0,514.3 451.1,502.6 451.2,512.8 451.4,505.1 451.5,510.5 451.6,491.1 451.8,500.5 451.9,503.2 452.0,503.6 452.2,503.8 452.3,499.9 452.4,507.1 452.5,495.7 452.7,503.2 452.8,499.5 452.9,505.5 453.1,509.2 453.2,502.4 453.3,505.8 453.5,501.4 453.6,503.8 453.7,481.8 453.8,509.8 454.0,505.5 454.1,501.6 454.2,498.9 454.4,499.1 454.5,492.0 454.6,513.0 454.8,498.5 454.9,505.0 455.0,488.4 455.1,484.8 455.3,498.4 455.4,489.8 455.5,503.4 455.7,482.5 455.8,481.5 455.9,506.4 456.1,499.3 456.2,494.8 456.3,478.2 456.4,488.1 456.6,484.1 456.7,490.9 456.8,492.3 457.0,498.6 457.1,497.9 457.2,491.7 457.4,499.5 457.5,480.0 457.6,490.2 457.7,489.8 457.9,496.1 458.0,490.3 458.1,490.6 458.3,497.3 458.4,492.9 458.5,478.0 458.7,481.4 458.8,488.2 458.9,484.4 459.0,480.8 459.2,494.2 459.3,486.6 459.4,487.1 459.6,474.4 459.7,490.3 459.8,491.7 460.0,481.6 460.1,476.5 460.2,501.8 460.3,501.5 460.5,496.7 460.6,492.3 460.7,492.4 460.9,501.9 461.0,493.9 461.1,488.8 461.3,480.8 461.4,488.6 461.5,495.6 461.6,489.1 461.8,501.1 461.9,507.3 462.0,494.8 462.2,506.0 462.3,499.8 462.4,510.2 462.6,497.0 462.7,508.5 462.8,490.9 462.9,495.5 463.1,491.6 463.2,504.2 463.3,500.0 463.5,506.3 463.6,512.4 463.7,500.4 463.9,501.3 464.0,517.5 464.1,511.3 464.2,505.4 464.4,505.3 464.5,501.4 464.6,498.3 464.8,502.1 464.9,514.5 465.0,507.2 465.2,498.1 465.3,514.5 465.4,526.2 465.5,499.1 465.7,510.7 465.8,501.5 465.9,515.1 466.1,506.1 466.2,514.0 466.3,512.6 466.5,504.6 466.6,505.3 466.7,500.5 466.8,514.6 467.0,499.9 467.1,507.1 467.2,507.0 467.4,505.8 467.5,509.1 467.6,514.9 467.8,506.3 467.9,505.9 468.0,512.1 468.1,507.4 468.3,516.5 468.4,503.4 468.5,515.9 468.7,505.8 468.8,514.8 468.9,508.3 469.1,522.0 469.2,505.1 469.3,510.8 469.4,508.3 469.6,516.3 469.7,511.2 469.8,513.1 470.0,500.6 470.1,521.3 470.2,508.3 470.4,530.2 470.5,513.4 470.6,508.4 470.7,518.4 470.9,515.4 471.0,502.0 471.1,531.5 471.3,509.7 471.4,510.1 471.5,506.4 471.7,520.5 471.8,519.0 471.9,514.5 472.0,509.9 472.2,525.0 472.3,515.5 472.4,532.1 472.6,515.1 472.7,508.7 472.8,506.4 473.0,523.3 473.1,518.6 473.2,502.7 473.3,506.7 473.5,498.4 473.6,513.6 473.7,515.2 473.9,518.9 474.0,498.3 474.1,510.0 474.3,517.6 474.4,508.5 474.5,500.9 474.6,512.7 474.8,504.9 474.9,513.0 475.0,507.4 475.2,501.6 475.3,502.8 475.4,517.2 475.6,509.6 475.7,504.9 475.8,493.7 475.9,510.0 476.1,498.8 476.2,522.4 476.3,514.0 476.5,512.8 476.6,496.1 476.7,498.6 476.9,511.4 477.0,494.5 477.1,508.2 477.2,509.1 477.4,499.5 477.5,525.1 477.6,487.9 477.8,493.2 477.9,502.4 478.0,509.4 478.2,505.1 478.3,509.3 478.4,511.3 478.5,501.9 478.7,511.2 478.8,508.2 478.9,518.2 479.1,518.1 479.2,504.0 479.3,510.7 479.5,492.8 479.6,517.8 479.7,496.8 479.8,506.9 480.0,502.4 480.1,493.3 480.2,500.2 480.4,511.6 480.5,512.6 480.6,491.1 480.8,507.4 480.9,492.7 481.0,496.6 481.1,485.5 481.3,517.2 481.4,530.2 481.5,491.7 481.7,497.8 481.8,497.9 481.9,497.9 482.1,507.7 482.2,499.5 482.3,499.9 482.4,510.9 482.6,494.8 482.7,500.9 482.8,498.7 483.0,504.9 483.1,488.5 483.2,487.8 483.4,494.1 483.5,515.3 483.6,494.4 483.7,515.2 483.9,509.6 484.0,500.8 484.1,523.7 484.3,527.7 484.4,509.3 484.5,509.1 484.7,517.6 484.8,520.4 484.9,510.9 485.0,510.5 485.2,510.0 485.3,516.0 485.4,504.9 485.6,527.1 485.7,520.1 485.8,509.8 486.0,505.9 486.1,513.8 486.2,521.5 486.3,500.8 486.5,503.0 486.6,523.7 486.7,525.4 486.9,515.0 487.0,518.6 487.1,522.2 487.3,522.4 487.4,519.8 487.5,529.1 487.6,526.8 487.8,523.7 487.9,517.0 488.0,543.8 488.2,558.7 488.3,512.2 488.4,529.2 488.6,532.6 488.7,507.6 488.8,557.5 488.9,546.7 489.1,523.1 489.2,528.7 489.3,513.9 489.5,513.9 489.6,521.0 489.7,517.2 489.9,506.4 490.0,518.6 490.1,509.8 490.2,515.9 490.4,515.3 490.5,524.3 490.6,496.0 490.8,523.2 490.9,549.1 491.0,517.3 491.2,523.6 491.3,532.9 491.4,506.8 491.5,534.6 491.7,492.5 491.8,516.7 491.9,511.1 492.1,544.4 492.2,517.8 492.3,506.7 492.5,514.2 492.6,521.5 492.7,500.6 492.8,501.7 493.0,494.9 493.1,506.8 493.2,515.2 493.4,527.2 493.5,496.7 493.6,534.5 493.8,530.6 493.9,499.8 494.0,528.2 494.1,492.3 494.3,494.3 494.4,490.8 494.5,517.2 494.7,515.2 494.8,517.5 494.9,514.0 495.1,520.0 495.2,528.4 495.3,516.2 495.4,516.2 495.6,486.9 495.7,501.1 495.8,517.1 496.0,517.8 496.1,493.2 496.2,526.0 496.4,510.1 496.5,514.7 496.6,503.3 496.7,519.7 496.9,519.5 497.0,506.6 497.1,474.6 497.3,516.4 497.4,505.6 497.5,485.6 497.7,499.0 497.8,481.4 497.9,499.4 498.0,489.0 498.2,521.8 498.3,503.5 498.4,493.2 498.6,511.4 498.7,485.9 498.8,488.5 499.0,503.8 499.1,508.9 499.2,507.3 499.3,489.5 499.5,499.7 499.6,494.8 499.7,490.9 499.9,505.1 500.0,488.8 500.1,500.1 500.3,495.3 500.4,483.8 500.5,485.5 500.6,488.3 500.8,498.0 500.9,478.9 501.0,496.7 501.2,515.8 501.3,484.2 501.4,484.8 501.6,490.5 501.7,481.9 501.8,499.8 501.9,491.7 502.1,480.6 502.2,501.7 502.3,511.7 502.5,480.5 502.6,492.2 502.7,495.0 502.9,490.5 503.0,500.3 503.1,487.8 503.2,497.4 503.4,492.8 503.5,479.5 503.6,498.4 503.8,505.3 503.9,486.3 504.0,496.0 504.2,480.8 504.3,487.6 504.4,495.5 504.5,490.9 504.7,489.1 504.8,481.8 504.9,512.1 505.1,497.7 505.2,490.6 505.3,493.1 505.5,498.1 505.6,494.8 505.7,503.6 505.8,501.8 506.0,484.1 506.1,481.4 506.2,494.6 506.4,487.7 506.5,488.4 506.6,500.8 506.8,497.8 506.9,500.9 507.0,488.3 507.1,490.6 507.3,497.6 507.4,484.7 507.5,484.7 507.7,478.2 507.8,495.2 507.9,506.2 508.1,497.4 508.2,498.4 508.3,474.0 508.4,485.2 508.6,477.9 508.7,493.2 508.8,481.5 509.0,487.5 509.1,483.7 509.2,492.7 509.4,494.3 509.5,482.4 509.6,501.2 509.7,487.1 509.9,484.6 510.0,484.8 510.1,481.9 510.3,496.9 510.4,479.2 510.5,481.6 510.7,492.6 510.8,476.2 510.9,485.7 511.0,457.6 511.2,476.6 511.3,458.0 511.4,486.1 511.6,475.4 511.7,502.3 511.8,489.5 512.0,490.8 512.1,475.9 512.2,478.8 512.3,500.6 512.5,482.8 512.6,473.6 512.7,495.2 512.9,475.0 513.0,480.1 513.1,485.7 513.3,486.8 513.4,490.9 513.5,499.4 513.6,503.1 513.8,517.9 513.9,497.2 514.0,500.8 514.2,498.3 514.3,494.4 514.4,501.6 514.6,493.2 514.7,485.5 514.8,505.8 514.9,488.9 515.1,488.3 515.2,502.9 515.3,498.7 515.5,494.6 515.6,498.6 515.7,499.1 515.9,498.7 516.0,518.2 516.1,519.4 516.2,527.2 516.4,500.1 516.5,505.4 516.6,499.2 516.8,510.9 516.9,520.7 517.0,503.9 517.2,507.2 517.3,521.2 517.4,509.4 517.5,520.6 517.7,528.2 517.8,516.4 517.9,508.3 518.1,553.9 518.2,505.8 518.3,538.7 518.5,505.0 518.6,526.7 518.7,493.5 518.8,521.6 519.0,544.8 519.1,529.9 519.2,533.7 519.4,501.9 519.5,518.2 519.6,533.4 519.8,512.0 519.9,561.5 520.0,532.5 520.1,552.2 520.3,524.2 520.4,538.2 520.5,510.3 520.7,530.0 520.8,552.0 520.9,535.1 521.1,548.2 521.2,551.8 521.3,543.7 521.4,548.2 521.6,546.2 521.7,536.2 521.8,560.7 522.0,557.0 522.1,556.0 522.2,553.0 522.4,552.8 522.5,555.3" fill="none" stroke="#000" stroke-width="1.05" stroke-linejoin="round"/>
<path d="M534.1,574.8 534.3,572.2 534.4,570.4 534.5,572.7 534.7,556.7 534.8,551.1 534.9,558.8 535.1,559.3 535.2,557.5 535.3,533.9 535.4,556.7 535.6,549.0 535.7,533.4 535.8,545.7 536.0,518.9 536.1,526.7 536.2,521.5 536.4,548.6 536.5,532.8 536.6,527.0 536.7,523.0 536.9,528.9 537.0,519.0 537.1,505.2 537.3,492.7 537.4,517.5 537.5,525.3 537.7,525.1 537.8,504.8 537.9,536.7 538.0,506.4 538.2,515.5 538.3,502.7 538.4,505.6 538.6,512.5 538.7,500.1 538.8,518.4 539.0,502.4 539.1,508.6 539.2,516.4 539.3,520.2 539.5,499.6 539.6,512.5 539.7,529.0 539.9,489.3 540.0,514.1 540.1,519.6 540.3,505.1 540.4,507.8 540.5,504.6 540.6,500.3 540.8,489.6 540.9,506.2 541.0,506.8 541.2,520.9 541.3,489.3 541.4,510.0 541.6,482.7 541.7,512.8 541.8,494.0 541.9,508.6 542.1,497.7 542.2,505.4 542.3,497.6 542.5,527.9 542.6,496.2 542.7,495.2 542.9,508.9 543.0,489.7 543.1,494.4 543.2,492.9 543.4,491.0 543.5,490.2 543.6,502.6 543.8,497.5 543.9,481.0 544.0,487.7 544.2,508.4 544.3,474.4 544.4,500.1 544.5,517.0 544.7,485.8 544.8,483.5 544.9,499.1 545.1,488.8 545.2,496.9 545.3,471.0 545.5,489.7 545.6,490.8 545.7,508.0 545.8,493.9 546.0,494.7 546.1,487.2 546.2,489.1 546.4,478.2 546.5,493.6 546.6,496.4 546.8,470.1 546.9,501.4 547.0,489.0 547.1,478.5 547.3,489.6 547.4,485.0 547.5,506.4 547.7,508.4 547.8,507.2 547.9,466.6 548.1,519.9 548.2,499.9 548.3,465.2 548.4,483.2 548.6,484.5 548.7,477.6 548.8,502.5 549.0,473.1 549.1,481.1 549.2,510.6 549.4,484.9 549.5,477.2 549.6,493.6 549.7,499.0 549.9,473.8 550.0,486.0 550.1,470.5 550.3,516.4 550.4,486.6 550.5,502.1 550.7,486.0 550.8,501.7 550.9,470.6 551.0,489.6 551.2,478.9 551.3,486.4 551.4,492.1 551.6,473.8 551.7,491.8 551.8,492.9 552.0,504.1 552.1,494.7 552.2,522.3 552.3,484.5 552.5,505.7 552.6,476.5 552.7,484.2 552.9,505.0 553.0,504.2 553.1,505.4 553.3,497.4 553.4,491.2 553.5,500.0 553.6,520.3 553.8,503.7 553.9,506.7 554.0,505.2 554.2,502.9 554.3,492.8 554.4,506.5 554.6,525.8 554.7,497.5 554.8,499.0 554.9,523.5 555.1,535.9 555.2,503.4 555.3,513.8 555.5,507.6 555.6,519.7 555.7,533.6 555.9,516.1 556.0,523.0 556.1,514.2 556.2,520.1 556.4,543.7 556.5,519.6 556.6,538.6 556.8,535.7 556.9,522.1 557.0,541.0 557.2,524.4 557.3,539.4 557.4,533.3 557.5,545.1 557.7,532.1 557.8,528.4 557.9,524.8 558.1,523.7 558.2,528.4 558.3,536.7 558.5,510.3 558.6,527.9 558.7,526.4 558.8,545.8 559.0,551.1 559.1,523.5 559.2,519.8 559.4,534.7 559.5,525.5 559.6,538.6 559.8,538.0 559.9,543.6 560.0,546.8 560.1,537.1 560.3,539.1 560.4,536.6 560.5,554.1 560.7,538.0 560.8,549.2 560.9,557.4 561.1,526.3 561.2,527.7 561.3,546.6 561.4,538.9 561.6,551.9 561.7,536.3 561.8,537.1 562.0,544.4 562.1,560.8 562.2,552.0 562.4,537.3 562.5,558.4 562.6,535.2 562.7,554.4 562.9,563.7 563.0,540.1 563.1,546.5 563.3,537.1 563.4,531.0 563.5,544.3 563.7,553.9 563.8,545.7 563.9,548.3 564.0,544.9 564.2,537.9 564.3,553.4 564.4,567.5 564.6,559.7 564.7,541.4 564.8,553.8 565.0,558.9 565.1,552.3 565.2,538.4 565.3,575.0 565.5,553.9 565.6,572.3 565.7,549.8 565.9,552.1 566.0,557.2 566.1,548.4 566.3,593.0 566.4,549.6 566.5,571.5 566.6,563.2 566.8,562.8 566.9,546.2 567.0,558.2 567.2,567.9 567.3,573.1 567.4,534.1 567.6,545.6 567.7,566.2 567.8,564.0 567.9,546.4 568.1,558.8 568.2,552.7 568.3,569.4 568.5,557.3 568.6,576.4 568.7,566.6 568.9,551.0 569.0,557.6 569.1,564.7 569.2,551.1 569.4,590.5 569.5,563.9 569.6,566.0 569.8,558.2 569.9,562.3 570.0,551.2 570.2,575.6 570.3,574.7 570.4,564.8 570.5,575.2 570.7,578.7 570.8,573.2 570.9,563.4 571.1,565.3 571.2,578.8 571.3,564.2 571.5,582.5 571.6,578.0 571.7,574.8 571.8,567.2 572.0,573.6 572.1,569.2 572.2,556.6 572.4,569.7 572.5,576.4 572.6,590.5 572.8,582.0 572.9,562.7 573.0,593.3 573.1,578.2 573.3,577.3 573.4,578.0 573.5,599.5 573.7,586.3 573.8,576.7 573.9,585.4 574.1,614.3 574.2,575.3 574.3,585.5 574.4,589.2 574.6,585.6 574.7,599.6 574.8,603.9 575.0,582.6 575.1,606.6 575.2,593.1 575.4,579.7 575.5,603.0 575.6,574.5 575.7,574.1 575.9,578.4 576.0,587.8 576.1,574.5 576.3,582.3 576.4,574.0 576.5,591.7 576.7,603.7 576.8,583.5 576.9,590.6 577.0,584.4 577.2,590.3 577.3,590.9 577.4,595.0 577.6,591.6 577.7,582.2 577.8,586.3 578.0,574.8 578.1,594.1 578.2,589.0 578.3,582.8 578.5,580.2 578.6,582.6 578.7,581.7 578.9,572.5 579.0,581.7 579.1,599.8 579.3,609.7 579.4,588.8 579.5,584.1 579.6,578.6 579.8,589.5 579.9,595.3 580.0,589.8 580.2,578.4 580.3,585.1 580.4,590.2 580.6,594.9 580.7,590.1 580.8,586.0 580.9,590.6 581.1,596.4 581.2,579.8 581.3,594.3 581.5,585.2 581.6,592.6 581.7,588.8 581.9,579.3 582.0,589.2 582.1,596.9 582.2,583.7 582.4,590.9 582.5,584.0 582.6,579.5 582.8,579.8 582.9,600.7 583.0,584.0 583.2,581.2 583.3,586.3 583.4,595.8 583.5,582.4 583.7,583.2 583.8,604.3 583.9,581.3 584.1,590.3 584.2,592.3 584.3,580.9 584.5,584.9 584.6,599.2 584.7,590.8 584.8,585.6 585.0,594.1 585.1,599.3 585.2,594.5 585.4,594.5 585.5,594.9 585.6,588.2 585.8,584.9 585.9,606.2 586.0,596.0 586.1,590.4 586.3,605.2 586.4,599.1 586.5,588.5 586.7,591.4 586.8,588.0 586.9,590.4 587.1,594.7 587.2,585.3 587.3,581.5 587.4,601.4 587.6,581.0 587.7,586.1 587.8,586.5 588.0,579.9 588.1,582.3 588.2,579.6 588.4,606.1 588.5,599.8 588.6,587.0 588.7,579.1 588.9,584.8 589.0,589.6 589.1,596.5 589.3,572.9 589.4,587.6 589.5,595.5 589.7,586.2 589.8,581.6 589.9,597.1 590.0,581.6 590.2,584.4 590.3,599.8 590.4,599.5 590.6,592.3 590.7,584.5 590.8,592.6 591.0,582.7 591.1,600.4 591.2,607.3 591.3,601.6 591.5,588.7 591.6,587.9 591.7,577.8 591.9,594.8 592.0,587.3 592.1,599.2 592.3,584.8 592.4,601.3 592.5,591.3 592.6,604.1 592.8,605.2 592.9,605.4 593.0,588.4 593.2,585.3 593.3,590.5 593.4,595.6 593.6,581.5 593.7,586.8 593.8,584.9 593.9,598.2 594.1,603.1 594.2,581.5 594.3,601.1 594.5,587.6 594.6,599.7 594.7,597.7 594.9,593.3 595.0,585.5 595.1,593.8 595.2,591.1 595.4,598.0 595.5,587.5 595.6,586.1 595.8,593.5 595.9,600.2 596.0,587.3 596.2,590.5 596.3,588.6 596.4,581.8 596.5,588.4 596.7,585.7 596.8,572.4 596.9,587.8 597.1,599.6 597.2,600.4 597.3,584.3 597.5,591.9 597.6,593.3 597.7,604.2 597.8,612.6 598.0,582.1 598.1,617.8 598.2,600.6 598.4,580.0 598.5,605.3 598.6,614.0 598.8,587.5 598.9,602.2 599.0,587.9 599.1,599.2 599.3,590.9 599.4,592.3 599.5,593.5 599.7,604.1 599.8,603.2 599.9,587.3 600.1,615.9 600.2,594.9 600.3,584.9 600.4,590.6 600.6,588.8 600.7,581.1 600.8,595.2 601.0,587.0 601.1,588.4 601.2,597.3 601.4,601.9 601.5,596.4 601.6,578.6 601.7,593.4 601.9,590.0 602.0,591.8 602.1,595.0 602.3,592.2 602.4,588.1 602.5,582.6 602.7,587.1 602.8,588.0 602.9,587.2 603.0,586.2 603.2,584.9 603.3,604.2 603.4,581.1 603.6,582.1 603.7,584.5 603.8,586.6 604.0,588.1 604.1,581.3 604.2,586.7 604.3,588.8 604.5,582.4 604.6,584.1 604.7,592.6 604.9,610.5 605.0,593.9 605.1,594.4 605.3,595.9 605.4,589.0 605.5,588.5 605.6,573.8 605.8,581.6 605.9,585.2 606.0,592.5 606.2,580.4 606.3,600.2 606.4,573.6 606.6,595.8 606.7,583.2 606.8,586.8 606.9,584.6 607.1,594.4 607.2,576.9 607.3,587.2 607.5,587.5 607.6,580.6 607.7,584.7 607.9,593.8 608.0,577.9 608.1,586.4 608.2,577.8 608.4,589.9 608.5,577.2 608.6,582.6 608.8,596.4 608.9,580.4 609.0,571.3 609.2,580.3 609.3,572.4 609.4,581.7 609.5,584.7 609.7,588.9 609.8,593.5 609.9,585.7 610.1,580.5 610.2,584.2 610.3,575.6 610.5,587.4 610.6,575.9 610.7,576.9 610.8,581.2 611.0,584.3 611.1,572.4 611.2,581.8 611.4,579.4 611.5,581.9 611.6,584.6 611.8,579.3 611.9,578.2 612.0,579.1 612.1,585.2 612.3,567.0 612.4,579.1 612.5,595.2 612.7,578.2 612.8,579.4 612.9,587.7 613.1,585.4 613.2,580.8 613.3,585.0 613.4,577.8 613.6,595.9 613.7,577.1 613.8,578.6 614.0,583.8 614.1,584.6 614.2,570.3 614.4,575.4 614.5,579.8 614.6,594.4 614.7,589.3 614.9,571.3 615.0,583.1 615.1,569.9 615.3,580.9 615.4,572.4 615.5,571.0 615.7,564.0 615.8,580.2 615.9,579.5 616.0,592.1 616.2,572.4 616.3,572.3 616.4,587.7 616.6,576.2 616.7,584.3 616.8,576.0 617.0,574.6 617.1,576.6 617.2,578.8 617.3,571.1 617.5,583.6 617.6,597.3 617.7,583.7 617.9,574.6 618.0,592.6 618.1,573.2 618.3,577.0 618.4,597.8 618.5,567.8 618.6,576.2 618.8,592.1 618.9,580.9 619.0,580.1 619.2,568.3 619.3,573.7 619.4,578.0 619.6,588.3 619.7,573.6 619.8,588.5 619.9,563.7 620.1,572.1 620.2,577.8 620.3,566.7 620.5,576.6 620.6,567.6 620.7,573.2 620.9,584.6 621.0,572.3 621.1,584.5 621.2,576.3 621.4,567.8 621.5,561.5 621.6,564.4 621.8,575.3 621.9,579.6 622.0,561.6 622.2,565.2 622.3,578.3 622.4,579.2 622.5,587.7 622.7,562.8 622.8,573.9 622.9,561.4 623.1,561.5 623.2,566.9 623.3,566.8 623.5,568.7 623.6,572.9 623.7,569.1 623.8,574.0 624.0,565.6 624.1,584.3 624.2,569.2 624.4,569.7 624.5,568.4 624.6,568.8 624.8,560.1 624.9,567.4 625.0,581.4 625.1,566.9 625.3,566.8 625.4,566.2 625.5,574.4 625.7,573.2 625.8,572.1 625.9,563.7 626.1,571.7 626.2,565.8 626.3,567.1 626.4,565.4 626.6,563.4 626.7,570.8 626.8,571.4 627.0,562.8 627.1,559.4 627.2,561.0 627.4,563.6 627.5,557.0 627.6,566.5 627.7,567.0 627.9,563.1 628.0,562.6 628.1,561.7 628.3,563.3 628.4,568.7 628.5,555.3 628.7,563.3 628.8,567.3 628.9,551.8 629.0,565.9 629.2,555.9 629.3,564.0 629.4,554.3 629.6,560.2 629.7,552.7 629.8,560.6 630.0,569.9 630.1,563.2 630.2,562.4 630.3,547.6 630.5,555.8 630.6,548.7 630.7,551.3 630.9,557.3 631.0,559.2 631.1,559.3 631.3,558.7 631.4,552.7 631.5,558.5 631.6,553.3 631.8,553.2 631.9,558.2 632.0,566.7 632.2,552.7 632.3,553.8 632.4,561.9 632.6,557.8 632.7,561.9 632.8,556.1 632.9,551.5 633.1,549.1 633.2,563.7 633.3,561.2 633.5,554.3 633.6,553.3 633.7,560.8 633.9,550.0 634.0,562.1 634.1,539.8 634.2,552.2 634.4,543.7 634.5,564.5 634.6,539.9 634.8,552.2 634.9,555.6 635.0,547.0 635.2,543.4 635.3,542.8 635.4,552.2 635.5,540.6 635.7,545.8 635.8,542.7 635.9,549.6 636.1,553.6 636.2,544.2 636.3,539.1 636.5,528.1 636.6,535.7 636.7,526.7 636.8,545.4 637.0,551.6 637.1,541.3 637.2,549.0 637.4,544.4 637.5,531.8 637.6,539.2 637.8,532.2 637.9,533.4 638.0,530.9 638.1,536.5 638.3,521.7 638.4,525.4 638.5,524.9 638.7,526.7 638.8,511.1 638.9,535.8 639.1,513.5 639.2,534.2 639.3,529.4 639.4,547.8 639.6,542.7 639.7,554.6 639.8,528.3 640.0,548.7 640.1,544.6 640.2,533.6 640.4,546.2 640.5,528.0 640.6,550.6 640.7,551.5 640.9,545.1 641.0,539.7 641.1,555.4 641.3,537.6 641.4,541.9 641.5,543.1 641.7,532.5 641.8,549.2 641.9,552.7 642.0,569.7 642.2,537.1 642.3,551.6 642.4,567.7 642.6,556.1 642.7,553.0 642.8,557.6 643.0,559.5 643.1,562.0 643.2,574.9 643.3,563.6 643.5,569.1 643.6,563.5 643.7,541.6 643.9,554.4 644.0,555.9 644.1,565.7 644.3,561.0 644.4,562.5 644.5,572.0 644.6,562.2 644.8,569.0 644.9,575.2 645.0,587.4 645.2,564.8 645.3,562.3 645.4,588.5 645.6,559.9 645.7,572.6 645.8,558.4 645.9,556.3 646.1,573.5 646.2,588.9 646.3,553.3 646.5,553.8 646.6,586.7 646.7,571.3 646.9,592.2 647.0,568.3 647.1,589.3 647.2,556.1 647.4,553.7 647.5,582.8 647.6,559.4 647.8,549.2 647.9,571.7 648.0,561.1 648.2,565.9 648.3,561.9 648.4,562.0 648.5,568.2 648.7,556.9 648.8,562.6 648.9,580.9 649.1,579.3 649.2,569.8 649.3,593.5 649.5,557.4 649.6,559.0 649.7,580.3 649.8,563.6 650.0,566.9 650.1,546.9 650.2,559.2 650.4,570.7 650.5,553.0 650.6,573.6 650.8,567.0 650.9,537.4 651.0,571.6 651.1,586.4 651.3,582.5 651.4,565.7 651.5,578.9 651.7,554.1 651.8,575.4 651.9,581.1 652.1,572.6 652.2,566.0 652.3,564.2 652.4,558.9 652.6,553.3 652.7,544.1 652.8,551.9 653.0,564.5 653.1,555.5 653.2,559.6 653.4,559.3 653.5,564.9 653.6,574.0 653.7,573.3 653.9,579.8 654.0,565.5 654.1,570.2 654.3,579.4 654.4,552.0 654.5,564.5 654.7,569.2 654.8,580.4 654.9,582.2 655.0,565.0 655.2,578.4 655.3,551.2 655.4,573.1 655.6,561.5 655.7,570.6 655.8,569.8 656.0,558.3 656.1,573.8 656.2,576.2 656.3,577.0 656.5,566.0 656.6,562.4 656.7,561.3 656.9,561.6 657.0,570.8 657.1,570.4 657.3,565.5 657.4,552.8 657.5,566.9 657.6,551.2 657.8,572.5 657.9,562.2 658.0,551.1 658.2,563.7 658.3,541.3 658.4,558.1 658.6,572.4 658.7,556.0 658.8,543.5 658.9,542.5 659.1,554.0 659.2,561.0 659.3,549.1 659.5,554.2 659.6,539.2 659.7,550.3 659.9,560.8 660.0,547.3 660.1,543.8 660.2,556.3 660.4,548.3 660.5,537.2 660.6,544.5 660.8,541.5 660.9,539.4 661.0,557.2 661.2,566.4 661.3,543.6 661.4,561.0 661.5,536.6 661.7,568.8 661.8,537.6 661.9,533.2 662.1,528.7 662.2,558.2 662.3,532.3 662.5,536.6 662.6,523.6 662.7,528.2 662.8,528.9 663.0,535.8 663.1,524.8 663.2,533.0 663.4,553.4 663.5,521.6 663.6,534.1 663.8,534.8 663.9,531.5 664.0,534.6 664.1,527.4 664.3,510.8 664.4,535.2 664.5,531.6 664.7,552.3 664.8,525.0 664.9,517.4 665.1,538.6 665.2,539.5 665.3,546.3 665.4,522.7 665.6,519.1 665.7,514.0 665.8,524.9 666.0,516.0 666.1,549.9 666.2,517.1 666.4,537.1 666.5,539.9 666.6,522.6 666.7,512.9 666.9,522.8 667.0,533.0 667.1,503.5 667.3,517.9 667.4,526.3 667.5,508.2 667.7,505.6 667.8,521.8 667.9,505.4 668.0,507.7 668.2,507.1 668.3,509.3 668.4,509.7 668.6,503.3 668.7,520.0 668.8,532.1 669.0,515.4 669.1,491.4 669.2,507.5 669.3,495.7 669.5,502.5 669.6,505.8 669.7,496.2 669.9,497.2 670.0,510.5 670.1,493.9 670.3,595.6 670.4,596.0 670.5,496.2 670.6,514.6 670.8,492.3 670.9,506.8 671.0,503.9 671.2,500.5 671.3,505.3 671.4,510.6 671.6,500.6 671.7,517.0 671.8,509.3 671.9,494.7 672.1,504.7 672.2,495.7 672.3,503.8 672.5,502.9 672.6,528.8 672.7,497.6 672.9,497.6 673.0,523.6 673.1,511.7 673.2,500.3 673.4,498.8 673.5,523.2 673.6,528.9 673.8,506.6 673.9,503.2 674.0,502.9 674.2,495.0 674.3,505.6 674.4,497.3 674.5,520.9 674.7,519.6 674.8,514.3 674.9,504.7 675.1,514.9 675.2,521.1 675.3,524.8 675.5,526.6 675.6,490.9 675.7,514.8 675.8,509.4 676.0,530.3 676.1,530.4 676.2,495.0 676.4,515.4 676.5,502.5 676.6,520.3 676.8,500.5 676.9,508.1 677.0,527.0 677.1,519.3 677.3,502.8 677.4,519.5 677.5,540.8 677.7,510.7 677.8,504.8 677.9,516.3 678.1,523.9 678.2,534.2 678.3,517.5 678.4,520.0 678.6,510.4 678.7,485.5 678.8,509.2 679.0,508.4 679.1,512.8 679.2,517.4 679.4,503.1 679.5,499.4 679.6,493.0 679.7,500.9 679.9,528.8 680.0,490.9 680.1,544.0 680.3,512.5 680.4,522.4 680.5,506.9 680.7,517.2 680.8,519.5 680.9,510.9 681.0,518.0 681.2,519.5 681.3,540.5 681.4,509.1 681.6,519.1 681.7,545.9 681.8,530.6 682.0,541.7 682.1,526.2 682.2,523.5 682.3,540.1 682.5,526.6 682.6,538.2 682.7,514.0 682.9,532.8 683.0,522.9 683.1,556.8 683.3,543.9 683.4,558.0 683.5,573.7 683.6,545.8 683.8,549.3 683.9,579.4 684.0,576.4 684.2,567.4 684.3,576.5 684.4,575.6 684.6,575.9" fill="none" stroke="#000" stroke-width="1.05" stroke-linejoin="round"/>
</g>
<g id="labels2">
<text x="453.5" y="413.7" text-anchor="middle" textLength="315">RBSP-A/ECT-HOPE electron Tperp/Tpar</text>
<text x="0" y="0" text-anchor="middle" transform="translate(165.9,531.4) rotate(-90)" textLength="97.4">e Tperp/Tpar</text>
<text x="202.8" y="456.8" text-anchor="end">2.2</text>
<text x="202.8" y="480.8" text-anchor="end">2.0</text>
<text x="202.8" y="505.8" text-anchor="end">1.8</text>
<text x="202.8" y="534.8" text-anchor="end">1.6</text>
<text x="202.8" y="567.8" text-anchor="end">1.4</text>
<text x="202.8" y="604.8" text-anchor="end">1.2</text>
<text x="261.4" y="653.8" text-anchor="end">00:00</text>
<text x="477.2" y="653.8" text-anchor="end">12:00</text>
<text x="693.2" y="653.8" text-anchor="end">00:00</text>
<text x="261.4" y="673.2" text-anchor="end">4.225</text>
<text x="477.2" y="673.2" text-anchor="end">5.756</text>
<text x="693.2" y="673.2" text-anchor="end">3.179</text>
<text x="261.4" y="693.1" text-anchor="end">-10.580</text>
<text x="477.2" y="693.1" text-anchor="end">-1.544</text>
<text x="693.2" y="693.1" text-anchor="end">-16.190</text>
<text x="261.4" y="713.0" text-anchor="end">2.247</text>
<text x="477.2" y="713.0" text-anchor="end">5.398</text>
<text x="693.2" y="713.0" text-anchor="end">8.125</text>
<text x="261.4" y="732.9" text-anchor="end">4.373</text>
<text x="477.2" y="732.9" text-anchor="end">5.760</text>
<text x="693.2" y="732.9" text-anchor="end">3.447</text>
<text x="174.8" y="672.9" text-anchor="end">R<tspan font-size="10.5" dy="4.2" font-weight="bold" stroke="none">E</tspan></text>
<text x="174.6" y="692.8" text-anchor="end">MLat</text>
<text x="174.6" y="713" text-anchor="end">MLT</text>
<text x="174.6" y="732.6" text-anchor="end">L</text>
<text x="453.8" y="757.0" text-anchor="middle" textLength="404">2012-12-01 (336) 23:00 to 2012-12-03 (338) 01:00</text>
</g>
</svg>
<div id="status">plot_1 selected</div>
<div id="pm"></div>
<svg id="pmicons" style="left:346px;top:358px;width:246px;height:26px" viewBox="0 0 246 26"><path d="M13 11h9l-4.5 6z" fill="#9e9e9e"/><path d="M223.5 10.5l6.5 6.5M230 10.5l-6.5 6.5" stroke="#9a9a9a" stroke-width="2.2" fill="none"/></svg>
<div id="pmtitle">Progress Monitor</div>
<div id="pmbody"></div>
<div id="pmtask">running batch</div>
<div id="pmsub">write /hom...walk3/product_20121231_12.png</div>
<div id="pmbar"></div>
<div id="pmcancel"></div>
<svg id="pmx" style="left:570px;top:411px;width:19px;height:20px" viewBox="0 0 19 20"><rect x="2.5" y="3.5" width="13" height="13" rx="2.5" fill="#e0424a" stroke="#b81f2a" stroke-width="1"/><path d="M3.5 5.5q5.5-2 11 0v3q-5.5 1.6-11 0z" fill="#f08088" opacity=".7"/><path d="M6 7l6 6M12 7l-6 6" stroke="#fff" stroke-width="2.2" fill="none"/></svg>
<div id="pmstat">62/62 (41.8/min, eta 1.4 s)</div>
</div>
</body>
</html>
